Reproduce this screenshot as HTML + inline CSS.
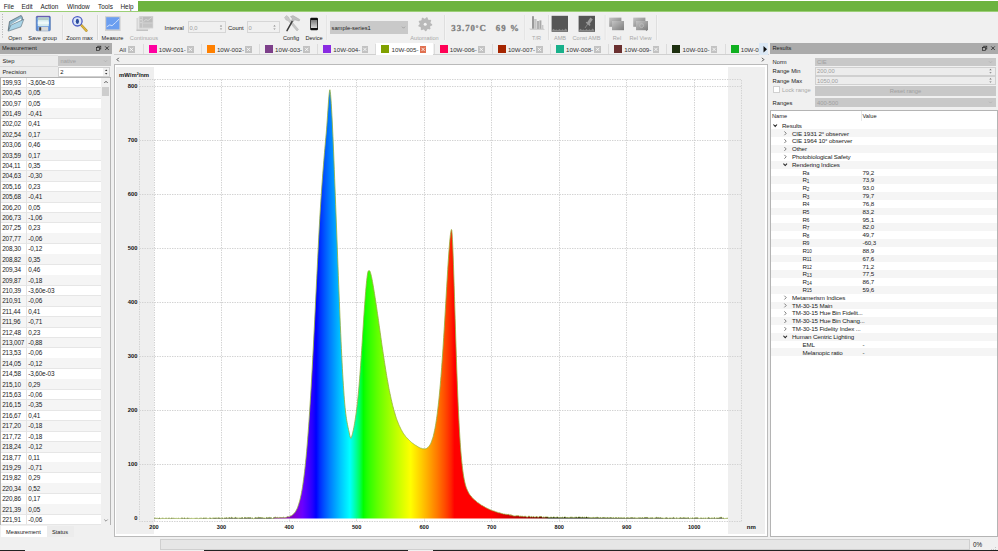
<!DOCTYPE html><html><head><meta charset="utf-8"><style>
html,body{margin:0;padding:0;}
body{width:998px;height:551px;overflow:hidden;position:relative;background:#f0f0f0;font-family:"Liberation Sans",sans-serif;}
.r{position:absolute;box-sizing:border-box;}
.t{position:absolute;white-space:nowrap;line-height:0;height:0;}
.t>span{display:inline-block;}
.sb{font-size:4.6px;position:relative;top:0.4px;}
svg{position:absolute;left:0;top:0;}
</style></head><body>
<div class="r" style="left:0px;top:0px;width:998px;height:12px;background:#fff"></div>
<div class="r" style="left:138px;top:1px;width:860px;height:10.5px;background:#6db33f"></div>
<div class="r" style="left:0px;top:11.3px;width:998px;height:1.2px;background:#9ccf77"></div>
<div class="t " style="left:3.7px;top:6.8px;font-size:6.4px;color:#1a1a1a;">File</div>
<div class="t " style="left:21.6px;top:6.8px;font-size:6.4px;color:#1a1a1a;">Edit</div>
<div class="t " style="left:40.6px;top:6.8px;font-size:6.4px;color:#1a1a1a;">Action</div>
<div class="t " style="left:67px;top:6.8px;font-size:6.4px;color:#1a1a1a;">Window</div>
<div class="t " style="left:98px;top:6.8px;font-size:6.4px;color:#1a1a1a;">Tools</div>
<div class="t " style="left:120.5px;top:6.8px;font-size:6.4px;color:#1a1a1a;">Help</div>
<div class="r" style="left:0px;top:12.5px;width:998px;height:30px;background:#f0f0f0"></div>
<svg width="998" height="551" style="pointer-events:none"><rect x="2" y="14.0" width="1" height="1" fill="#b0b0b0"/><rect x="2" y="16.5" width="1" height="1" fill="#b0b0b0"/><rect x="2" y="19.0" width="1" height="1" fill="#b0b0b0"/><rect x="2" y="21.5" width="1" height="1" fill="#b0b0b0"/><rect x="2" y="24.0" width="1" height="1" fill="#b0b0b0"/><rect x="2" y="26.5" width="1" height="1" fill="#b0b0b0"/><rect x="2" y="29.0" width="1" height="1" fill="#b0b0b0"/><rect x="2" y="31.5" width="1" height="1" fill="#b0b0b0"/><rect x="2" y="34.0" width="1" height="1" fill="#b0b0b0"/><rect x="2" y="36.5" width="1" height="1" fill="#b0b0b0"/><rect x="62" y="15" width="0.8" height="25" fill="#d4d4d4"/><rect x="62.8" y="15" width="0.6" height="25" fill="#fafafa"/><rect x="97.2" y="15" width="0.8" height="25" fill="#d4d4d4"/><rect x="98.0" y="15" width="0.6" height="25" fill="#fafafa"/><rect x="326.6" y="15" width="0.8" height="25" fill="#d4d4d4"/><rect x="327.40000000000003" y="15" width="0.6" height="25" fill="#fafafa"/><rect x="444.4" y="15" width="0.8" height="25" fill="#d4d4d4"/><rect x="445.2" y="15" width="0.6" height="25" fill="#fafafa"/><rect x="524.6" y="15" width="0.8" height="25" fill="#d4d4d4"/><rect x="525.4" y="15" width="0.6" height="25" fill="#fafafa"/><rect x="548.4" y="15" width="0.8" height="25" fill="#d4d4d4"/><rect x="549.1999999999999" y="15" width="0.6" height="25" fill="#fafafa"/><rect x="604.8" y="15" width="0.8" height="25" fill="#d4d4d4"/><rect x="605.5999999999999" y="15" width="0.6" height="25" fill="#fafafa"/><rect x="656" y="15" width="0.8" height="25" fill="#d4d4d4"/><rect x="656.8" y="15" width="0.6" height="25" fill="#fafafa"/></svg>
<div class="t" style="left:15px;top:37.5px;font-size:5.6px;color:#222;transform:translateX(-50%)">Open</div>
<div class="t" style="left:42.5px;top:37.5px;font-size:5.6px;color:#222;transform:translateX(-50%)">Save group</div>
<div class="t" style="left:79.5px;top:37.5px;font-size:5.6px;color:#222;transform:translateX(-50%)">Zoom max</div>
<div class="t" style="left:112.5px;top:37.5px;font-size:5.6px;color:#222;transform:translateX(-50%)">Measure</div>
<div class="t" style="left:144px;top:37.5px;font-size:5.6px;color:#a8a8a8;transform:translateX(-50%)">Continuous</div>
<div class="t" style="left:291px;top:37.5px;font-size:5.6px;color:#222;transform:translateX(-50%)">Config</div>
<div class="t" style="left:314px;top:37.5px;font-size:5.6px;color:#222;transform:translateX(-50%)">Device</div>
<div class="t" style="left:424.5px;top:37.5px;font-size:5.6px;color:#a8a8a8;transform:translateX(-50%)">Automation</div>
<div class="t" style="left:536.5px;top:37.5px;font-size:5.6px;color:#a8a8a8;transform:translateX(-50%)">T/R</div>
<div class="t" style="left:560px;top:37.5px;font-size:5.6px;color:#a8a8a8;transform:translateX(-50%)">AMB</div>
<div class="t" style="left:586.5px;top:37.5px;font-size:5.6px;color:#a8a8a8;transform:translateX(-50%)">Const AMB</div>
<div class="t" style="left:617px;top:37.5px;font-size:5.6px;color:#a8a8a8;transform:translateX(-50%)">Rel</div>
<div class="t" style="left:640.5px;top:37.5px;font-size:5.6px;color:#a8a8a8;transform:translateX(-50%)">Rel View</div>
<svg width="998" height="551" style="pointer-events:none"><g>
<path d="M8.2,30.5 L9.5,21.5 L19.5,16.2 L21.2,15.5 L22.3,17.2 L22.5,19.8 L12,25.5 Z" fill="#8fb8cc" stroke="#4a5a66" stroke-width="0.7"/>
<path d="M10.5,24.8 L20.8,18.5 L21.5,20.2 L11.2,26.5 Z" fill="#ffffff"/>
<path d="M8.3,31.2 L10.8,25.2 L23.8,19.3 L21,26.8 Z" fill="#a9d3e6" stroke="#5a6e7a" stroke-width="0.6"/>
</g><g>
<rect x="36.2" y="16.2" width="14.2" height="14.6" rx="1" fill="#5b8fdc" stroke="#3c5f9c" stroke-width="0.5"/>
<rect x="36.6" y="16.4" width="13.4" height="1" fill="#6a3f9e"/>
<rect x="37.8" y="17.4" width="11" height="8.8" fill="#d6ecee"/>
<rect x="37.8" y="17.4" width="11" height="2.6" fill="#b4ccc8"/>
<rect x="37.8" y="21.5" width="11" height="2.6" fill="#eef8fa"/>
<rect x="38.6" y="26.8" width="9.6" height="4" fill="#d9d9d9"/>
<rect x="39.2" y="27.2" width="2" height="3.4" fill="#3a3a3a"/>
</g><g>
<line x1="81.2" y1="25" x2="86.4" y2="30.6" stroke="#9a7a20" stroke-width="2.4" stroke-linecap="round"/>
<line x1="81.2" y1="25" x2="86.4" y2="30.6" stroke="#e0b840" stroke-width="1.6" stroke-linecap="round"/>
<circle cx="77.4" cy="21.3" r="4.7" fill="#dbe6f8" stroke="#4c5cc4" stroke-width="1.3"/>
<ellipse cx="77.4" cy="21.3" rx="1.6" ry="2.6" fill="#2a4a9a"/>
</g><g>
<rect x="105" y="16.2" width="15.6" height="14.8" fill="#d0d0d0"/>
<rect x="106.2" y="17.2" width="13.2" height="12.2" fill="#6b9ef0"/>
<path d="M106.8,26.8 L109.8,24.9 L112,25.8 L115.5,22.6 L119,19.2" fill="none" stroke="#e8f0ff" stroke-width="0.8"/>
</g><g>
<rect x="136.5" y="18" width="11.5" height="12.8" fill="#d4d4d4"/>
<rect x="137.8" y="17" width="12" height="12.6" fill="#e4e4e4"/>
<rect x="139.2" y="16" width="14" height="12.4" fill="#d0d0d0"/>
<rect x="143" y="17" width="9.4" height="5.4" fill="#bcbcbc"/>
<path d="M143.5,21.5 L146,19.5 L148,20.5 L151.8,17.5" stroke="#e8e8e8" stroke-width="0.6" fill="none"/>
<rect x="143" y="23.6" width="9.4" height="3.8" fill="#c4c4c4"/>
<rect x="139.8" y="17.5" width="2.2" height="10" fill="#c2c2c2"/>
<rect x="139.8" y="19.5" width="2.2" height="0.6" fill="#e6e6e6"/>
<rect x="139.8" y="22.5" width="2.2" height="0.6" fill="#e6e6e6"/>
<rect x="136.5" y="29.6" width="11.5" height="1.3" fill="#c0c0c0"/>
</g><g>
<path d="M284.5,17.5 L286.5,15.5 L288.5,17 L289.5,19 L298.5,29.5 L297,31 L288,20.5 L286,20 Z" fill="#c8c8c8" stroke="#a8a8a8" stroke-width="0.4"/>
<line x1="292.6" y1="20.6" x2="287" y2="30.6" stroke="#3a3a3a" stroke-width="1.5" stroke-linecap="round"/>
<path d="M290.5,16.5 L293,15.6 L299.8,19.5 L299.2,21 L294.5,19.8 L293.5,21.5 L291.5,20.5 L292.3,18.8 Z" fill="#c0c0c0" stroke="#9a9a9a" stroke-width="0.4"/>
</g><g>
<rect x="310.2" y="17.8" width="7.8" height="12.4" rx="1.2" fill="#111"/>
<defs><linearGradient id="scr" x1="0" y1="0" x2="0" y2="1"><stop offset="0" stop-color="#7a7a7a"/><stop offset="1" stop-color="#d8d8d8"/></linearGradient></defs>
<rect x="311" y="20" width="6.2" height="8" fill="url(#scr)"/>
</g><path d="M432.20,24.20 L432.09,25.42 L430.46,26.12 L430.05,27.00 L430.56,28.70 L429.70,29.56 L428.00,29.05 L427.12,29.46 L426.42,31.09 L425.20,31.20 L424.23,29.71 L423.28,29.46 L421.70,30.26 L420.70,29.56 L420.91,27.80 L420.35,27.00 L418.62,26.59 L418.31,25.42 L419.60,24.20 L419.69,23.23 L418.62,21.81 L419.14,20.70 L420.91,20.60 L421.60,19.91 L421.70,18.14 L422.81,17.62 L424.23,18.69 L425.20,18.60 L426.42,17.31 L427.59,17.62 L428.00,19.35 L428.80,19.91 L430.56,19.70 L431.26,20.70 L430.46,22.28 L430.71,23.23Z" fill="#b9b9b9"/><circle cx="425.2" cy="24.2" r="1.5" fill="#f4f4f4"/><g fill="#bdbdbd">
<path d="M529,28.5 L543.5,28.5 L545,30 L530.5,30 Z" fill="#cfcfcf"/>
<rect x="532" y="16.2" width="2" height="12.5" fill="#9a9a9a"/>
<rect x="534.2" y="19" width="2.4" height="9.8" fill="#c4c4c4"/>
<rect x="537" y="21" width="2" height="8" fill="#b0b0b0"/>
<rect x="539.4" y="20.4" width="2" height="8.4" fill="#a8a8a8"/>
<rect x="541.8" y="25" width="1.6" height="4" fill="#c8c8c8"/>
</g><g>
<rect x="551.6" y="15.8" width="16.4" height="16" fill="#555555"/>
<path d="M552.2,31.2 L552.2,30 L553.5,28.8 L555,30 L556.5,29.4 L558,30.2 L559.5,29 L561,30.2 L562.5,29.2 L564,30.2 L565.5,28.6 L567.3,30 L567.3,31.2 Z" fill="#8a8a8a"/>
</g><g>
<rect x="578.6" y="15.8" width="16.4" height="16" fill="#555555"/>
<path d="M579.2,31.2 L579.2,30 L580.5,28.8 L582,30 L583.5,29.4 L585,30.2 L586.5,29 L588,30.2 L589.5,29.2 L591,30.2 L592.5,28.6 L594.3,30 L594.3,31.2 Z" fill="#8a8a8a"/>
<line x1="585" y1="28" x2="588.2" y2="23.4" stroke="#999" stroke-width="0.7"/>
<path d="M587,22.5 L590.5,17.6 L592.8,19.6 L589.2,24.6 Z" fill="#9c9c9c"/>
<path d="M586.2,22.2 L590.2,25.4" stroke="#9c9c9c" stroke-width="1.4"/>
</g><g>
<defs><linearGradient id="relg" x1="0" y1="0" x2="1" y2="1"><stop offset="0" stop-color="#c4c4c4"/><stop offset="1" stop-color="#7c7c7c"/></linearGradient></defs>
<rect x="609.2" y="17.6" width="12.2" height="9.2" fill="url(#relg)"/>
<rect x="612" y="21" width="12" height="9.2" fill="url(#relg)"/>
<rect x="633.2" y="17.6" width="12.2" height="9.2" fill="url(#relg)"/>
<rect x="636" y="21" width="12" height="9.2" fill="url(#relg)"/>
<circle cx="641.6" cy="25.6" r="2" fill="none" stroke="#c0c0c0" stroke-width="0.7"/>
<line x1="643" y1="27.2" x2="647" y2="31" stroke="#8a8a8a" stroke-width="0.9"/>
</g></svg>
<div class="t " style="left:164.5px;top:27.6px;font-size:5.9px;color:#222;">Interval</div>
<div class="r" style="left:187.5px;top:21.3px;width:38px;height:12px;background:#f0f0f0;border:1px solid #d6d6d6"></div>
<div class="t " style="left:189.5px;top:27.6px;font-size:5.8px;color:#a0a0a0;">0,0</div>
<div class="t " style="left:228px;top:27.6px;font-size:5.9px;color:#222;">Count</div>
<div class="r" style="left:246.5px;top:21.3px;width:33px;height:12px;background:#f0f0f0;border:1px solid #d6d6d6"></div>
<div class="t " style="left:248.5px;top:27.6px;font-size:5.8px;color:#a0a0a0;">0</div>
<div class="r" style="left:329.5px;top:21px;width:78px;height:12.8px;background:#c9c9c9"></div>
<div class="t " style="left:331.5px;top:27.5px;font-size:5.8px;color:#222;">sample-series1</div>
<div class="t " style="left:451.3px;top:27.6px;font-size:8.8px;color:#7e7e7e;font-family:'Liberation Serif',serif;letter-spacing:0.95px;-webkit-text-stroke:0.3px #7e7e7e"><b>33.70<span style="font-size:6.5px;position:relative;top:-0.6px">°</span>C</b></div>
<div class="t " style="left:495.8px;top:27.6px;font-size:8.8px;color:#7e7e7e;font-family:'Liberation Serif',serif;letter-spacing:1.1px;-webkit-text-stroke:0.3px #7e7e7e"><b>69 %</b></div>
<div class="r" style="left:0px;top:42.5px;width:111.8px;height:11.3px;background:#ababab"></div>
<div class="t " style="left:2px;top:48.2px;font-size:5.7px;color:#1a1a1a;">Measurement</div>
<div class="r" style="left:0px;top:55.5px;width:58px;height:11px;background:#ececec"></div>
<div class="t " style="left:2.5px;top:61px;font-size:5.8px;color:#222;">Step</div>
<div class="r" style="left:58px;top:55.8px;width:52.7px;height:10.5px;background:#c8c8c8"></div>
<div class="t " style="left:60.5px;top:61px;font-size:5.8px;color:#a0a0a0;">native</div>
<div class="r" style="left:0px;top:66.8px;width:58px;height:10.5px;background:#ececec"></div>
<div class="t " style="left:2.5px;top:72px;font-size:5.8px;color:#222;">Precision</div>
<div class="r" style="left:0px;top:66.2px;width:58px;height:0.7px;background:#d9d9d9"></div>
<div class="r" style="left:0px;top:55.2px;width:58px;height:0.6px;background:#e2e2e2"></div>
<div class="r" style="left:58.3px;top:67.2px;width:52px;height:9.5px;background:#f0f0f0;border:1px solid #cfcfcf"></div>
<div class="r" style="left:59px;top:67.8px;width:43.6px;height:8.4px;background:#fff"></div>
<div class="t " style="left:60.2px;top:72px;font-size:5.8px;color:#111;">2</div>
<div class="r" style="left:0px;top:77.2px;width:111px;height:448px;background:#fff;border:1px solid #b4b4b4"></div>
<div class="r" style="left:1px;top:87.16px;width:100px;height:0.5px;background:#e6e6e6"></div>
<div class="t " style="left:2.2px;top:82.755px;font-size:6.4px;color:#1a1a1a;letter-spacing:-0.15px">199,93</div>
<div class="t " style="left:28.3px;top:82.755px;font-size:6.4px;color:#1a1a1a;letter-spacing:-0.15px">-3,60e-03</div>
<div class="r" style="left:1px;top:87.66px;width:100px;height:10.41px;background:#f5f5f5"></div>
<div class="r" style="left:1px;top:97.57px;width:100px;height:0.5px;background:#e6e6e6"></div>
<div class="t " style="left:2.2px;top:93.16499999999999px;font-size:6.4px;color:#1a1a1a;letter-spacing:-0.15px">200,45</div>
<div class="t " style="left:28.3px;top:93.16499999999999px;font-size:6.4px;color:#1a1a1a;letter-spacing:-0.15px">0,05</div>
<div class="r" style="left:1px;top:107.97999999999999px;width:100px;height:0.5px;background:#e6e6e6"></div>
<div class="t " style="left:2.2px;top:103.57499999999999px;font-size:6.4px;color:#1a1a1a;letter-spacing:-0.15px">200,97</div>
<div class="t " style="left:28.3px;top:103.57499999999999px;font-size:6.4px;color:#1a1a1a;letter-spacing:-0.15px">0,05</div>
<div class="r" style="left:1px;top:108.48px;width:100px;height:10.41px;background:#f5f5f5"></div>
<div class="r" style="left:1px;top:118.39px;width:100px;height:0.5px;background:#e6e6e6"></div>
<div class="t " style="left:2.2px;top:113.985px;font-size:6.4px;color:#1a1a1a;letter-spacing:-0.15px">201,49</div>
<div class="t " style="left:28.3px;top:113.985px;font-size:6.4px;color:#1a1a1a;letter-spacing:-0.15px">-0,41</div>
<div class="r" style="left:1px;top:128.8px;width:100px;height:0.5px;background:#e6e6e6"></div>
<div class="t " style="left:2.2px;top:124.395px;font-size:6.4px;color:#1a1a1a;letter-spacing:-0.15px">202,02</div>
<div class="t " style="left:28.3px;top:124.395px;font-size:6.4px;color:#1a1a1a;letter-spacing:-0.15px">0,41</div>
<div class="r" style="left:1px;top:129.3px;width:100px;height:10.41px;background:#f5f5f5"></div>
<div class="r" style="left:1px;top:139.21px;width:100px;height:0.5px;background:#e6e6e6"></div>
<div class="t " style="left:2.2px;top:134.80500000000004px;font-size:6.4px;color:#1a1a1a;letter-spacing:-0.15px">202,54</div>
<div class="t " style="left:28.3px;top:134.80500000000004px;font-size:6.4px;color:#1a1a1a;letter-spacing:-0.15px">0,17</div>
<div class="r" style="left:1px;top:149.62px;width:100px;height:0.5px;background:#e6e6e6"></div>
<div class="t " style="left:2.2px;top:145.21500000000003px;font-size:6.4px;color:#1a1a1a;letter-spacing:-0.15px">203,06</div>
<div class="t " style="left:28.3px;top:145.21500000000003px;font-size:6.4px;color:#1a1a1a;letter-spacing:-0.15px">0,46</div>
<div class="r" style="left:1px;top:150.12px;width:100px;height:10.41px;background:#f5f5f5"></div>
<div class="r" style="left:1px;top:160.03px;width:100px;height:0.5px;background:#e6e6e6"></div>
<div class="t " style="left:2.2px;top:155.62500000000003px;font-size:6.4px;color:#1a1a1a;letter-spacing:-0.15px">203,59</div>
<div class="t " style="left:28.3px;top:155.62500000000003px;font-size:6.4px;color:#1a1a1a;letter-spacing:-0.15px">0,17</div>
<div class="r" style="left:1px;top:170.44px;width:100px;height:0.5px;background:#e6e6e6"></div>
<div class="t " style="left:2.2px;top:166.03500000000003px;font-size:6.4px;color:#1a1a1a;letter-spacing:-0.15px">204,11</div>
<div class="t " style="left:28.3px;top:166.03500000000003px;font-size:6.4px;color:#1a1a1a;letter-spacing:-0.15px">0,35</div>
<div class="r" style="left:1px;top:170.94px;width:100px;height:10.41px;background:#f5f5f5"></div>
<div class="r" style="left:1px;top:180.85px;width:100px;height:0.5px;background:#e6e6e6"></div>
<div class="t " style="left:2.2px;top:176.44500000000002px;font-size:6.4px;color:#1a1a1a;letter-spacing:-0.15px">204,63</div>
<div class="t " style="left:28.3px;top:176.44500000000002px;font-size:6.4px;color:#1a1a1a;letter-spacing:-0.15px">-0,30</div>
<div class="r" style="left:1px;top:191.26px;width:100px;height:0.5px;background:#e6e6e6"></div>
<div class="t " style="left:2.2px;top:186.85500000000002px;font-size:6.4px;color:#1a1a1a;letter-spacing:-0.15px">205,16</div>
<div class="t " style="left:28.3px;top:186.85500000000002px;font-size:6.4px;color:#1a1a1a;letter-spacing:-0.15px">0,23</div>
<div class="r" style="left:1px;top:191.76px;width:100px;height:10.41px;background:#f5f5f5"></div>
<div class="r" style="left:1px;top:201.67px;width:100px;height:0.5px;background:#e6e6e6"></div>
<div class="t " style="left:2.2px;top:197.26500000000001px;font-size:6.4px;color:#1a1a1a;letter-spacing:-0.15px">205,68</div>
<div class="t " style="left:28.3px;top:197.26500000000001px;font-size:6.4px;color:#1a1a1a;letter-spacing:-0.15px">-0,41</div>
<div class="r" style="left:1px;top:212.08px;width:100px;height:0.5px;background:#e6e6e6"></div>
<div class="t " style="left:2.2px;top:207.67500000000004px;font-size:6.4px;color:#1a1a1a;letter-spacing:-0.15px">206,20</div>
<div class="t " style="left:28.3px;top:207.67500000000004px;font-size:6.4px;color:#1a1a1a;letter-spacing:-0.15px">0,05</div>
<div class="r" style="left:1px;top:212.58px;width:100px;height:10.41px;background:#f5f5f5"></div>
<div class="r" style="left:1px;top:222.49px;width:100px;height:0.5px;background:#e6e6e6"></div>
<div class="t " style="left:2.2px;top:218.08500000000004px;font-size:6.4px;color:#1a1a1a;letter-spacing:-0.15px">206,73</div>
<div class="t " style="left:28.3px;top:218.08500000000004px;font-size:6.4px;color:#1a1a1a;letter-spacing:-0.15px">-1,06</div>
<div class="r" style="left:1px;top:232.9px;width:100px;height:0.5px;background:#e6e6e6"></div>
<div class="t " style="left:2.2px;top:228.49500000000003px;font-size:6.4px;color:#1a1a1a;letter-spacing:-0.15px">207,25</div>
<div class="t " style="left:28.3px;top:228.49500000000003px;font-size:6.4px;color:#1a1a1a;letter-spacing:-0.15px">0,23</div>
<div class="r" style="left:1px;top:233.4px;width:100px;height:10.41px;background:#f5f5f5"></div>
<div class="r" style="left:1px;top:243.31px;width:100px;height:0.5px;background:#e6e6e6"></div>
<div class="t " style="left:2.2px;top:238.90500000000003px;font-size:6.4px;color:#1a1a1a;letter-spacing:-0.15px">207,77</div>
<div class="t " style="left:28.3px;top:238.90500000000003px;font-size:6.4px;color:#1a1a1a;letter-spacing:-0.15px">-0,06</div>
<div class="r" style="left:1px;top:253.72px;width:100px;height:0.5px;background:#e6e6e6"></div>
<div class="t " style="left:2.2px;top:249.31500000000003px;font-size:6.4px;color:#1a1a1a;letter-spacing:-0.15px">208,30</div>
<div class="t " style="left:28.3px;top:249.31500000000003px;font-size:6.4px;color:#1a1a1a;letter-spacing:-0.15px">-0,12</div>
<div class="r" style="left:1px;top:254.22px;width:100px;height:10.41px;background:#f5f5f5"></div>
<div class="r" style="left:1px;top:264.13px;width:100px;height:0.5px;background:#e6e6e6"></div>
<div class="t " style="left:2.2px;top:259.725px;font-size:6.4px;color:#1a1a1a;letter-spacing:-0.15px">208,82</div>
<div class="t " style="left:28.3px;top:259.725px;font-size:6.4px;color:#1a1a1a;letter-spacing:-0.15px">0,35</div>
<div class="r" style="left:1px;top:274.54px;width:100px;height:0.5px;background:#e6e6e6"></div>
<div class="t " style="left:2.2px;top:270.135px;font-size:6.4px;color:#1a1a1a;letter-spacing:-0.15px">209,34</div>
<div class="t " style="left:28.3px;top:270.135px;font-size:6.4px;color:#1a1a1a;letter-spacing:-0.15px">0,46</div>
<div class="r" style="left:1px;top:275.03999999999996px;width:100px;height:10.41px;background:#f5f5f5"></div>
<div class="r" style="left:1px;top:284.95px;width:100px;height:0.5px;background:#e6e6e6"></div>
<div class="t " style="left:2.2px;top:280.54499999999996px;font-size:6.4px;color:#1a1a1a;letter-spacing:-0.15px">209,87</div>
<div class="t " style="left:28.3px;top:280.54499999999996px;font-size:6.4px;color:#1a1a1a;letter-spacing:-0.15px">-0,18</div>
<div class="r" style="left:1px;top:295.36px;width:100px;height:0.5px;background:#e6e6e6"></div>
<div class="t " style="left:2.2px;top:290.955px;font-size:6.4px;color:#1a1a1a;letter-spacing:-0.15px">210,39</div>
<div class="t " style="left:28.3px;top:290.955px;font-size:6.4px;color:#1a1a1a;letter-spacing:-0.15px">-3,60e-03</div>
<div class="r" style="left:1px;top:295.86px;width:100px;height:10.41px;background:#f5f5f5"></div>
<div class="r" style="left:1px;top:305.77000000000004px;width:100px;height:0.5px;background:#e6e6e6"></div>
<div class="t " style="left:2.2px;top:301.365px;font-size:6.4px;color:#1a1a1a;letter-spacing:-0.15px">210,91</div>
<div class="t " style="left:28.3px;top:301.365px;font-size:6.4px;color:#1a1a1a;letter-spacing:-0.15px">-0,06</div>
<div class="r" style="left:1px;top:316.18px;width:100px;height:0.5px;background:#e6e6e6"></div>
<div class="t " style="left:2.2px;top:311.775px;font-size:6.4px;color:#1a1a1a;letter-spacing:-0.15px">211,44</div>
<div class="t " style="left:28.3px;top:311.775px;font-size:6.4px;color:#1a1a1a;letter-spacing:-0.15px">0,41</div>
<div class="r" style="left:1px;top:316.68px;width:100px;height:10.41px;background:#f5f5f5"></div>
<div class="r" style="left:1px;top:326.59000000000003px;width:100px;height:0.5px;background:#e6e6e6"></div>
<div class="t " style="left:2.2px;top:322.185px;font-size:6.4px;color:#1a1a1a;letter-spacing:-0.15px">211,96</div>
<div class="t " style="left:28.3px;top:322.185px;font-size:6.4px;color:#1a1a1a;letter-spacing:-0.15px">-0,71</div>
<div class="r" style="left:1px;top:337.00000000000006px;width:100px;height:0.5px;background:#e6e6e6"></div>
<div class="t " style="left:2.2px;top:332.595px;font-size:6.4px;color:#1a1a1a;letter-spacing:-0.15px">212,48</div>
<div class="t " style="left:28.3px;top:332.595px;font-size:6.4px;color:#1a1a1a;letter-spacing:-0.15px">0,23</div>
<div class="r" style="left:1px;top:337.5px;width:100px;height:10.41px;background:#f5f5f5"></div>
<div class="r" style="left:1px;top:347.41px;width:100px;height:0.5px;background:#e6e6e6"></div>
<div class="t " style="left:2.2px;top:343.005px;font-size:6.4px;color:#1a1a1a;letter-spacing:-0.15px">213,007</div>
<div class="t " style="left:28.3px;top:343.005px;font-size:6.4px;color:#1a1a1a;letter-spacing:-0.15px">-0,88</div>
<div class="r" style="left:1px;top:357.82000000000005px;width:100px;height:0.5px;background:#e6e6e6"></div>
<div class="t " style="left:2.2px;top:353.415px;font-size:6.4px;color:#1a1a1a;letter-spacing:-0.15px">213,53</div>
<div class="t " style="left:28.3px;top:353.415px;font-size:6.4px;color:#1a1a1a;letter-spacing:-0.15px">-0,06</div>
<div class="r" style="left:1px;top:358.32px;width:100px;height:10.41px;background:#f5f5f5"></div>
<div class="r" style="left:1px;top:368.23px;width:100px;height:0.5px;background:#e6e6e6"></div>
<div class="t " style="left:2.2px;top:363.825px;font-size:6.4px;color:#1a1a1a;letter-spacing:-0.15px">214,05</div>
<div class="t " style="left:28.3px;top:363.825px;font-size:6.4px;color:#1a1a1a;letter-spacing:-0.15px">-0,12</div>
<div class="r" style="left:1px;top:378.64000000000004px;width:100px;height:0.5px;background:#e6e6e6"></div>
<div class="t " style="left:2.2px;top:374.235px;font-size:6.4px;color:#1a1a1a;letter-spacing:-0.15px">214,58</div>
<div class="t " style="left:28.3px;top:374.235px;font-size:6.4px;color:#1a1a1a;letter-spacing:-0.15px">-3,60e-03</div>
<div class="r" style="left:1px;top:379.14px;width:100px;height:10.41px;background:#f5f5f5"></div>
<div class="r" style="left:1px;top:389.05px;width:100px;height:0.5px;background:#e6e6e6"></div>
<div class="t " style="left:2.2px;top:384.645px;font-size:6.4px;color:#1a1a1a;letter-spacing:-0.15px">215,10</div>
<div class="t " style="left:28.3px;top:384.645px;font-size:6.4px;color:#1a1a1a;letter-spacing:-0.15px">0,29</div>
<div class="r" style="left:1px;top:399.46000000000004px;width:100px;height:0.5px;background:#e6e6e6"></div>
<div class="t " style="left:2.2px;top:395.055px;font-size:6.4px;color:#1a1a1a;letter-spacing:-0.15px">215,63</div>
<div class="t " style="left:28.3px;top:395.055px;font-size:6.4px;color:#1a1a1a;letter-spacing:-0.15px">-0,06</div>
<div class="r" style="left:1px;top:399.96px;width:100px;height:10.41px;background:#f5f5f5"></div>
<div class="r" style="left:1px;top:409.87px;width:100px;height:0.5px;background:#e6e6e6"></div>
<div class="t " style="left:2.2px;top:405.465px;font-size:6.4px;color:#1a1a1a;letter-spacing:-0.15px">216,15</div>
<div class="t " style="left:28.3px;top:405.465px;font-size:6.4px;color:#1a1a1a;letter-spacing:-0.15px">-0,35</div>
<div class="r" style="left:1px;top:420.28000000000003px;width:100px;height:0.5px;background:#e6e6e6"></div>
<div class="t " style="left:2.2px;top:415.875px;font-size:6.4px;color:#1a1a1a;letter-spacing:-0.15px">216,67</div>
<div class="t " style="left:28.3px;top:415.875px;font-size:6.4px;color:#1a1a1a;letter-spacing:-0.15px">0,41</div>
<div class="r" style="left:1px;top:420.78000000000003px;width:100px;height:10.41px;background:#f5f5f5"></div>
<div class="r" style="left:1px;top:430.69000000000005px;width:100px;height:0.5px;background:#e6e6e6"></div>
<div class="t " style="left:2.2px;top:426.285px;font-size:6.4px;color:#1a1a1a;letter-spacing:-0.15px">217,20</div>
<div class="t " style="left:28.3px;top:426.285px;font-size:6.4px;color:#1a1a1a;letter-spacing:-0.15px">-0,18</div>
<div class="r" style="left:1px;top:441.1px;width:100px;height:0.5px;background:#e6e6e6"></div>
<div class="t " style="left:2.2px;top:436.695px;font-size:6.4px;color:#1a1a1a;letter-spacing:-0.15px">217,72</div>
<div class="t " style="left:28.3px;top:436.695px;font-size:6.4px;color:#1a1a1a;letter-spacing:-0.15px">-0,18</div>
<div class="r" style="left:1px;top:441.6px;width:100px;height:10.41px;background:#f5f5f5"></div>
<div class="r" style="left:1px;top:451.51000000000005px;width:100px;height:0.5px;background:#e6e6e6"></div>
<div class="t " style="left:2.2px;top:447.105px;font-size:6.4px;color:#1a1a1a;letter-spacing:-0.15px">218,24</div>
<div class="t " style="left:28.3px;top:447.105px;font-size:6.4px;color:#1a1a1a;letter-spacing:-0.15px">-0,12</div>
<div class="r" style="left:1px;top:461.92px;width:100px;height:0.5px;background:#e6e6e6"></div>
<div class="t " style="left:2.2px;top:457.515px;font-size:6.4px;color:#1a1a1a;letter-spacing:-0.15px">218,77</div>
<div class="t " style="left:28.3px;top:457.515px;font-size:6.4px;color:#1a1a1a;letter-spacing:-0.15px">0,11</div>
<div class="r" style="left:1px;top:462.42px;width:100px;height:10.41px;background:#f5f5f5"></div>
<div class="r" style="left:1px;top:472.33000000000004px;width:100px;height:0.5px;background:#e6e6e6"></div>
<div class="t " style="left:2.2px;top:467.925px;font-size:6.4px;color:#1a1a1a;letter-spacing:-0.15px">219,29</div>
<div class="t " style="left:28.3px;top:467.925px;font-size:6.4px;color:#1a1a1a;letter-spacing:-0.15px">-0,71</div>
<div class="r" style="left:1px;top:482.74px;width:100px;height:0.5px;background:#e6e6e6"></div>
<div class="t " style="left:2.2px;top:478.335px;font-size:6.4px;color:#1a1a1a;letter-spacing:-0.15px">219,82</div>
<div class="t " style="left:28.3px;top:478.335px;font-size:6.4px;color:#1a1a1a;letter-spacing:-0.15px">0,29</div>
<div class="r" style="left:1px;top:483.24px;width:100px;height:10.41px;background:#f5f5f5"></div>
<div class="r" style="left:1px;top:493.15000000000003px;width:100px;height:0.5px;background:#e6e6e6"></div>
<div class="t " style="left:2.2px;top:488.745px;font-size:6.4px;color:#1a1a1a;letter-spacing:-0.15px">220,34</div>
<div class="t " style="left:28.3px;top:488.745px;font-size:6.4px;color:#1a1a1a;letter-spacing:-0.15px">0,52</div>
<div class="r" style="left:1px;top:503.56px;width:100px;height:0.5px;background:#e6e6e6"></div>
<div class="t " style="left:2.2px;top:499.155px;font-size:6.4px;color:#1a1a1a;letter-spacing:-0.15px">220,86</div>
<div class="t " style="left:28.3px;top:499.155px;font-size:6.4px;color:#1a1a1a;letter-spacing:-0.15px">0,17</div>
<div class="r" style="left:1px;top:504.06px;width:100px;height:10.41px;background:#f5f5f5"></div>
<div class="r" style="left:1px;top:513.97px;width:100px;height:0.5px;background:#e6e6e6"></div>
<div class="t " style="left:2.2px;top:509.565px;font-size:6.4px;color:#1a1a1a;letter-spacing:-0.15px">221,39</div>
<div class="t " style="left:28.3px;top:509.565px;font-size:6.4px;color:#1a1a1a;letter-spacing:-0.15px">0,05</div>
<div class="r" style="left:1px;top:524.38px;width:100px;height:0.5px;background:#e6e6e6"></div>
<div class="t " style="left:2.2px;top:519.975px;font-size:6.4px;color:#1a1a1a;letter-spacing:-0.15px">221,91</div>
<div class="t " style="left:28.3px;top:519.975px;font-size:6.4px;color:#1a1a1a;letter-spacing:-0.15px">-0,06</div>
<div class="r" style="left:26.3px;top:77.6px;width:0.6px;height:447px;background:#e4e4e4"></div>
<div class="r" style="left:101px;top:77.6px;width:9.2px;height:447px;background:#f0f0f0"></div>
<div class="r" style="left:102px;top:86.6px;width:7.2px;height:9px;background:#cdcdcd"></div>
<div class="r" style="left:0.5px;top:526px;width:46.5px;height:10.8px;background:#fff"></div>
<div class="t " style="left:6px;top:531.6px;font-size:5.7px;color:#222;">Measurement</div>
<div class="r" style="left:47px;top:526px;width:27px;height:10.5px;background:#ececec"></div>
<div class="t " style="left:52px;top:531.6px;font-size:5.7px;color:#222;">Status</div>
<div class="r" style="left:114px;top:43px;width:655px;height:11.5px;background:#f0f0f0"></div>
<div class="r" style="left:114px;top:54.2px;width:655px;height:0.8px;background:#d0d0d0"></div>
<div class="r" style="left:114px;top:55px;width:655px;height:9.3px;background:#f0f0f0"></div>
<div class="t " style="left:119.3px;top:49.8px;font-size:6px;color:#333;">All</div>
<div class="r" style="left:128px;top:46px;width:6.8px;height:6.8px;background:#c2c2c2"></div>
<svg width="998" height="551" style="pointer-events:none"><path d="M129.8,47.8 L133,51 M133,47.8 L129.8,51" stroke="#fff" stroke-width="0.8"/></svg>
<div class="r" style="left:142.5px;top:43.5px;width:0.8px;height:10.5px;background:#dcdcdc"></div>
<div class="r" style="left:148.5px;top:45px;width:8px;height:7.8px;background:#ff00a0"></div>
<div class="t " style="left:158.7px;top:49.8px;font-size:6.2px;color:#333;">10W-001-</div>
<div class="r" style="left:186.9px;top:46px;width:6.8px;height:6.8px;background:#c2c2c2"></div>
<svg width="998" height="551" style="pointer-events:none"><path d="M188.70000000000002,47.8 L191.9,51 M191.9,47.8 L188.70000000000002,51" stroke="#fff" stroke-width="0.8"/></svg>
<div class="r" style="left:200.7px;top:43.5px;width:0.8px;height:10.5px;background:#dcdcdc"></div>
<div class="r" style="left:206.7px;top:45px;width:8px;height:7.8px;background:#ff8000"></div>
<div class="t " style="left:216.89999999999998px;top:49.8px;font-size:6.2px;color:#333;">10W-002-</div>
<div class="r" style="left:245.1px;top:46px;width:6.8px;height:6.8px;background:#c2c2c2"></div>
<svg width="998" height="551" style="pointer-events:none"><path d="M246.9,47.8 L250.1,51 M250.1,47.8 L246.9,51" stroke="#fff" stroke-width="0.8"/></svg>
<div class="r" style="left:258.9px;top:43.5px;width:0.8px;height:10.5px;background:#dcdcdc"></div>
<div class="r" style="left:264.9px;top:45px;width:8px;height:7.8px;background:#7d3f8a"></div>
<div class="t " style="left:275.09999999999997px;top:49.8px;font-size:6.2px;color:#333;">10W-003-</div>
<div class="r" style="left:303.29999999999995px;top:46px;width:6.8px;height:6.8px;background:#c2c2c2"></div>
<svg width="998" height="551" style="pointer-events:none"><path d="M305.09999999999997,47.8 L308.29999999999995,51 M308.29999999999995,47.8 L305.09999999999997,51" stroke="#fff" stroke-width="0.8"/></svg>
<div class="r" style="left:317.1px;top:43.5px;width:0.8px;height:10.5px;background:#dcdcdc"></div>
<div class="r" style="left:323.1px;top:45px;width:8px;height:7.8px;background:#8a2be2"></div>
<div class="t " style="left:333.3px;top:49.8px;font-size:6.2px;color:#333;">10W-004-</div>
<div class="r" style="left:361.5px;top:46px;width:6.8px;height:6.8px;background:#c2c2c2"></div>
<svg width="998" height="551" style="pointer-events:none"><path d="M363.3,47.8 L366.5,51 M366.5,47.8 L363.3,51" stroke="#fff" stroke-width="0.8"/></svg>
<div class="r" style="left:375.3px;top:43.5px;width:0.8px;height:10.5px;background:#dcdcdc"></div>
<div class="r" style="left:376.1px;top:43px;width:57.4px;height:11.8px;background:#fff"></div>
<div class="r" style="left:381.3px;top:45px;width:8px;height:7.8px;background:#80a000"></div>
<div class="t " style="left:391.5px;top:49.8px;font-size:6.2px;color:#333;">10W-005-</div>
<div class="r" style="left:419.7px;top:46px;width:6.8px;height:6.8px;background:#e07050"></div>
<svg width="998" height="551" style="pointer-events:none"><path d="M421.5,47.8 L424.7,51 M424.7,47.8 L421.5,51" stroke="#fff" stroke-width="0.8"/></svg>
<div class="r" style="left:433.5px;top:43.5px;width:0.8px;height:10.5px;background:#dcdcdc"></div>
<div class="r" style="left:439.5px;top:45px;width:8px;height:7.8px;background:#ff0055"></div>
<div class="t " style="left:449.7px;top:49.8px;font-size:6.2px;color:#333;">10W-006-</div>
<div class="r" style="left:477.9px;top:46px;width:6.8px;height:6.8px;background:#c2c2c2"></div>
<svg width="998" height="551" style="pointer-events:none"><path d="M479.7,47.8 L482.9,51 M482.9,47.8 L479.7,51" stroke="#fff" stroke-width="0.8"/></svg>
<div class="r" style="left:491.70000000000005px;top:43.5px;width:0.8px;height:10.5px;background:#dcdcdc"></div>
<div class="r" style="left:497.70000000000005px;top:45px;width:8px;height:7.8px;background:#a52500"></div>
<div class="t " style="left:507.90000000000003px;top:49.8px;font-size:6.2px;color:#333;">10W-007-</div>
<div class="r" style="left:536.1px;top:46px;width:6.8px;height:6.8px;background:#c2c2c2"></div>
<svg width="998" height="551" style="pointer-events:none"><path d="M537.9,47.8 L541.1,51 M541.1,47.8 L537.9,51" stroke="#fff" stroke-width="0.8"/></svg>
<div class="r" style="left:549.9000000000001px;top:43.5px;width:0.8px;height:10.5px;background:#dcdcdc"></div>
<div class="r" style="left:555.9000000000001px;top:45px;width:8px;height:7.8px;background:#18b08a"></div>
<div class="t " style="left:566.1000000000001px;top:49.8px;font-size:6.2px;color:#333;">10W-008-</div>
<div class="r" style="left:594.3000000000001px;top:46px;width:6.8px;height:6.8px;background:#c2c2c2"></div>
<svg width="998" height="551" style="pointer-events:none"><path d="M596.1,47.8 L599.3000000000001,51 M599.3000000000001,47.8 L596.1,51" stroke="#fff" stroke-width="0.8"/></svg>
<div class="r" style="left:608.1px;top:43.5px;width:0.8px;height:10.5px;background:#dcdcdc"></div>
<div class="r" style="left:614.1px;top:45px;width:8px;height:7.8px;background:#6b3030"></div>
<div class="t " style="left:624.3000000000001px;top:49.8px;font-size:6.2px;color:#333;">10W-009-</div>
<div class="r" style="left:652.5px;top:46px;width:6.8px;height:6.8px;background:#c2c2c2"></div>
<svg width="998" height="551" style="pointer-events:none"><path d="M654.3,47.8 L657.5,51 M657.5,47.8 L654.3,51" stroke="#fff" stroke-width="0.8"/></svg>
<div class="r" style="left:666.3000000000001px;top:43.5px;width:0.8px;height:10.5px;background:#dcdcdc"></div>
<div class="r" style="left:672.3000000000001px;top:45px;width:8px;height:7.8px;background:#1e3010"></div>
<div class="t " style="left:682.5000000000001px;top:49.8px;font-size:6.2px;color:#333;">10W-010-</div>
<div class="r" style="left:710.7px;top:46px;width:6.8px;height:6.8px;background:#c2c2c2"></div>
<svg width="998" height="551" style="pointer-events:none"><path d="M712.5,47.8 L715.7,51 M715.7,47.8 L712.5,51" stroke="#fff" stroke-width="0.8"/></svg>
<div class="r" style="left:724.5px;top:43.5px;width:0.8px;height:10.5px;background:#dcdcdc"></div>
<div class="r" style="left:730.5px;top:45px;width:8px;height:7.8px;background:#10b020"></div>
<div class="t " style="left:740.7px;top:49.8px;font-size:6.2px;color:#333;">10W-011-</div>
<div class="r" style="left:759px;top:43px;width:9px;height:11.5px;background:#dbe8f5"></div>
<svg width="998" height="551" style="pointer-events:none"><path d="M763.5,46 L767,49.3 L763.5,52.6 Z" fill="#111"/><path d="M118.8,57.8 L117,59.6 L118.8,61.4" fill="none" stroke="#333" stroke-width="0.9"/><path d="M762,57.8 L763.8,59.6 L762,61.4" fill="none" stroke="#333" stroke-width="0.9"/></svg>
<div class="r" style="left:114px;top:64.2px;width:654px;height:473.2px;background:#fff;border:1px solid #bababa"></div>
<div class="r" style="left:115.8px;top:66.8px;width:38.2px;height:467px;background:#efefef"></div>
<div class="r" style="left:727.8px;top:66.8px;width:37.2px;height:467px;background:#efefef"></div>
<svg width="998" height="551" style="pointer-events:none"><defs><linearGradient id="spec" gradientUnits="userSpaceOnUse" x1="154.0" y1="0" x2="728.0" y2="0"><stop offset="0.2000" stop-color="#000000"/><stop offset="0.2059" stop-color="#000000"/><stop offset="0.2118" stop-color="#610061"/><stop offset="0.2176" stop-color="#6f0077"/><stop offset="0.2235" stop-color="#79008d"/><stop offset="0.2294" stop-color="#8000a1"/><stop offset="0.2353" stop-color="#8300b5"/><stop offset="0.2412" stop-color="#8200c8"/><stop offset="0.2471" stop-color="#7e00db"/><stop offset="0.2529" stop-color="#7600ed"/><stop offset="0.2588" stop-color="#6a00ff"/><stop offset="0.2647" stop-color="#5400ff"/><stop offset="0.2706" stop-color="#3d00ff"/><stop offset="0.2765" stop-color="#2300ff"/><stop offset="0.2824" stop-color="#0000ff"/><stop offset="0.2882" stop-color="#0028ff"/><stop offset="0.2941" stop-color="#0046ff"/><stop offset="0.3000" stop-color="#0061ff"/><stop offset="0.3059" stop-color="#007bff"/><stop offset="0.3118" stop-color="#0092ff"/><stop offset="0.3176" stop-color="#00a9ff"/><stop offset="0.3235" stop-color="#00c0ff"/><stop offset="0.3294" stop-color="#00d5ff"/><stop offset="0.3353" stop-color="#00eaff"/><stop offset="0.3412" stop-color="#00ffff"/><stop offset="0.3471" stop-color="#00ffcb"/><stop offset="0.3529" stop-color="#00ff92"/><stop offset="0.3588" stop-color="#00ff54"/><stop offset="0.3647" stop-color="#00ff00"/><stop offset="0.3706" stop-color="#1fff00"/><stop offset="0.3765" stop-color="#36ff00"/><stop offset="0.3824" stop-color="#4aff00"/><stop offset="0.3882" stop-color="#5eff00"/><stop offset="0.3941" stop-color="#70ff00"/><stop offset="0.4000" stop-color="#81ff00"/><stop offset="0.4059" stop-color="#92ff00"/><stop offset="0.4118" stop-color="#a3ff00"/><stop offset="0.4176" stop-color="#b3ff00"/><stop offset="0.4235" stop-color="#c3ff00"/><stop offset="0.4294" stop-color="#d2ff00"/><stop offset="0.4353" stop-color="#e1ff00"/><stop offset="0.4412" stop-color="#f0ff00"/><stop offset="0.4471" stop-color="#ffff00"/><stop offset="0.4529" stop-color="#ffef00"/><stop offset="0.4588" stop-color="#ffdf00"/><stop offset="0.4647" stop-color="#ffcf00"/><stop offset="0.4706" stop-color="#ffbe00"/><stop offset="0.4765" stop-color="#ffad00"/><stop offset="0.4824" stop-color="#ff9b00"/><stop offset="0.4882" stop-color="#ff8900"/><stop offset="0.4941" stop-color="#ff7700"/><stop offset="0.5000" stop-color="#ff6300"/><stop offset="0.5059" stop-color="#ff4f00"/><stop offset="0.5118" stop-color="#ff3900"/><stop offset="0.5176" stop-color="#ff2100"/><stop offset="0.5235" stop-color="#ff0000"/><stop offset="0.5294" stop-color="#ff0000"/><stop offset="0.5353" stop-color="#ff0000"/><stop offset="0.5412" stop-color="#ff0000"/><stop offset="0.5471" stop-color="#ff0000"/><stop offset="0.5529" stop-color="#ff0000"/><stop offset="0.5588" stop-color="#ff0000"/><stop offset="0.5647" stop-color="#ff0000"/><stop offset="0.5706" stop-color="#ff0000"/><stop offset="0.5765" stop-color="#ff0000"/><stop offset="0.5824" stop-color="#ff0000"/><stop offset="0.5882" stop-color="#ff0000"/><stop offset="0.5941" stop-color="#f60000"/><stop offset="0.6000" stop-color="#ed0000"/><stop offset="0.6059" stop-color="#e40000"/><stop offset="0.6118" stop-color="#db0000"/><stop offset="0.6176" stop-color="#d10000"/><stop offset="0.6235" stop-color="#c80000"/><stop offset="0.6294" stop-color="#be0000"/><stop offset="0.6353" stop-color="#b50000"/><stop offset="0.6412" stop-color="#ab0000"/><stop offset="0.6471" stop-color="#a10000"/><stop offset="0.6529" stop-color="#970000"/><stop offset="0.6588" stop-color="#8d0000"/><stop offset="0.6647" stop-color="#820000"/><stop offset="0.6706" stop-color="#770000"/><stop offset="0.6765" stop-color="#6d0000"/><stop offset="0.6824" stop-color="#610000"/><stop offset="0.6882" stop-color="#000000"/></linearGradient></defs><g stroke="#d2d2d2" stroke-width="1" stroke-dasharray="1.4,1.1"><line x1="154.5" y1="79.5" x2="154.5" y2="521.5"/><line x1="221.5" y1="79.5" x2="221.5" y2="521.5"/><line x1="289.5" y1="79.5" x2="289.5" y2="521.5"/><line x1="356.5" y1="79.5" x2="356.5" y2="521.5"/><line x1="424.5" y1="79.5" x2="424.5" y2="521.5"/><line x1="491.5" y1="79.5" x2="491.5" y2="521.5"/><line x1="559.5" y1="79.5" x2="559.5" y2="521.5"/><line x1="626.5" y1="79.5" x2="626.5" y2="521.5"/><line x1="694.5" y1="79.5" x2="694.5" y2="521.5"/><line x1="139.5" y1="464.5" x2="741.5" y2="464.5"/><line x1="139.5" y1="410.5" x2="741.5" y2="410.5"/><line x1="139.5" y1="356.5" x2="741.5" y2="356.5"/><line x1="139.5" y1="302.5" x2="741.5" y2="302.5"/><line x1="139.5" y1="248.5" x2="741.5" y2="248.5"/><line x1="139.5" y1="194.5" x2="741.5" y2="194.5"/><line x1="139.5" y1="140.5" x2="741.5" y2="140.5"/><line x1="139.5" y1="86.5" x2="741.5" y2="86.5"/><rect x="139.5" y="79.5" width="602" height="442" fill="none"/></g><path d="M154.0,518.5 L154.00,518.06 L154.34,518.16 L154.68,518.21 L155.01,518.17 L155.35,518.14 L155.69,518.21 L156.03,518.33 L156.36,518.35 L156.70,518.37 L157.04,518.42 L157.38,518.33 L157.71,518.35 L158.05,518.67 L158.39,518.66 L158.73,518.28 L159.06,518.05 L159.40,517.98 L159.74,518.03 L160.08,518.34 L160.41,518.55 L160.75,518.61 L161.09,518.57 L161.43,518.44 L161.77,518.28 L162.10,518.15 L162.44,518.15 L162.78,518.22 L163.12,518.25 L163.45,518.33 L163.79,518.44 L164.13,518.48 L164.47,518.52 L164.80,518.46 L165.14,518.35 L165.48,518.29 L165.82,518.23 L166.15,518.19 L166.49,518.19 L166.83,518.35 L167.17,518.44 L167.50,518.42 L167.84,518.47 L168.18,518.35 L168.52,518.20 L168.86,518.08 L169.19,518.05 L169.53,518.19 L169.87,518.42 L170.21,518.56 L170.54,518.50 L170.88,518.29 L171.22,518.07 L171.56,518.06 L171.89,518.25 L172.23,518.28 L172.57,518.25 L172.91,518.21 L173.24,518.21 L173.58,518.29 L173.92,518.28 L174.26,518.35 L174.60,518.40 L174.93,518.28 L175.27,518.37 L175.61,518.45 L175.95,518.38 L176.28,518.32 L176.62,518.42 L176.96,518.55 L177.30,518.56 L177.63,518.39 L177.97,518.20 L178.31,518.19 L178.65,518.24 L178.98,518.29 L179.32,518.41 L179.66,518.50 L180.00,518.42 L180.33,518.42 L180.67,518.47 L181.01,518.33 L181.35,518.16 L181.69,517.93 L182.02,517.87 L182.36,518.10 L182.70,518.25 L183.04,518.32 L183.37,518.40 L183.71,518.34 L184.05,518.11 L184.39,517.94 L184.72,517.89 L185.06,518.04 L185.40,518.38 L185.74,518.45 L186.07,518.30 L186.41,518.36 L186.75,518.48 L187.09,518.28 L187.42,518.02 L187.76,517.89 L188.10,518.03 L188.44,518.27 L188.78,518.29 L189.11,518.26 L189.45,518.32 L189.79,518.42 L190.13,518.51 L190.46,518.48 L190.80,518.35 L191.14,518.24 L191.48,518.29 L191.81,518.46 L192.15,518.53 L192.49,518.48 L192.83,518.39 L193.16,518.43 L193.50,518.45 L193.84,518.41 L194.18,518.43 L194.51,518.40 L194.85,518.32 L195.19,518.30 L195.53,518.33 L195.87,518.27 L196.20,518.23 L196.54,518.24 L196.88,518.28 L197.22,518.30 L197.55,518.30 L197.89,518.41 L198.23,518.57 L198.57,518.56 L198.90,518.38 L199.24,518.29 L199.58,518.34 L199.92,518.24 L200.25,518.14 L200.59,518.21 L200.93,518.25 L201.27,518.18 L201.61,518.19 L201.94,518.24 L202.28,518.35 L202.62,518.44 L202.96,518.27 L203.29,518.03 L203.63,517.99 L203.97,517.98 L204.31,517.99 L204.64,518.19 L204.98,518.31 L205.32,518.17 L205.66,517.96 L205.99,517.88 L206.33,517.96 L206.67,518.19 L207.01,518.42 L207.34,518.48 L207.68,518.38 L208.02,518.32 L208.36,518.43 L208.70,518.50 L209.03,518.43 L209.37,518.15 L209.71,517.95 L210.05,518.04 L210.38,518.07 L210.72,518.07 L211.06,518.25 L211.40,518.39 L211.73,518.35 L212.07,518.21 L212.41,518.17 L212.75,518.20 L213.08,518.18 L213.42,518.06 L213.76,517.96 L214.10,518.03 L214.43,518.06 L214.77,518.00 L215.11,518.00 L215.45,517.96 L215.79,517.93 L216.12,517.90 L216.46,517.95 L216.80,518.15 L217.14,518.25 L217.47,518.14 L217.81,517.95 L218.15,517.83 L218.49,517.85 L218.82,518.00 L219.16,517.98 L219.50,517.91 L219.84,517.94 L220.17,518.08 L220.51,518.29 L220.85,518.31 L221.19,518.27 L221.53,518.27 L221.86,518.14 L222.20,517.97 L222.54,517.88 L222.88,518.08 L223.21,518.38 L223.55,518.40 L223.89,518.18 L224.23,517.96 L224.56,517.93 L224.90,517.98 L225.24,517.97 L225.58,517.94 L225.91,517.92 L226.25,517.84 L226.59,517.72 L226.93,517.76 L227.26,517.96 L227.60,518.16 L227.94,518.33 L228.28,518.23 L228.62,517.85 L228.95,517.69 L229.29,517.73 L229.63,517.60 L229.97,517.66 L230.30,517.99 L230.64,518.08 L230.98,517.79 L231.32,517.48 L231.65,517.39 L231.99,517.53 L232.33,517.80 L232.67,517.98 L233.00,518.04 L233.34,518.12 L233.68,518.19 L234.02,518.07 L234.35,517.90 L234.69,517.90 L235.03,517.84 L235.37,517.57 L235.71,517.41 L236.04,517.55 L236.38,517.89 L236.72,518.05 L237.06,517.91 L237.39,517.94 L237.73,518.14 L238.07,518.20 L238.41,518.13 L238.74,518.20 L239.08,518.19 L239.42,518.00 L239.76,517.94 L240.09,518.04 L240.43,518.09 L240.77,518.06 L241.11,517.90 L241.44,517.83 L241.78,517.83 L242.12,517.71 L242.46,517.62 L242.80,517.87 L243.13,518.31 L243.47,518.47 L243.81,518.21 L244.15,517.92 L244.48,517.61 L244.82,517.41 L245.16,517.55 L245.50,517.73 L245.83,517.74 L246.17,517.80 L246.51,517.92 L246.85,518.09 L247.18,518.13 L247.52,517.82 L247.86,517.62 L248.20,517.72 L248.53,517.71 L248.87,517.62 L249.21,517.67 L249.55,517.72 L249.89,517.75 L250.22,517.66 L250.56,517.62 L250.90,518.05 L251.24,518.39 L251.57,518.15 L251.91,517.82 L252.25,517.80 L252.59,518.01 L252.92,518.37 L253.26,518.60 L253.60,518.60 L253.94,518.50 L254.27,518.33 L254.61,518.05 L254.95,517.91 L255.29,517.79 L255.63,517.47 L255.96,517.41 L256.30,517.67 L256.64,517.90 L256.98,517.91 L257.31,517.95 L257.65,517.84 L257.99,517.59 L258.33,517.40 L258.66,517.40 L259.00,517.68 L259.34,517.75 L259.68,517.41 L260.01,517.26 L260.35,517.54 L260.69,517.83 L261.03,517.91 L261.36,517.86 L261.70,517.69 L262.04,517.56 L262.38,517.66 L262.72,518.05 L263.05,518.32 L263.39,518.11 L263.73,517.93 L264.07,518.04 L264.40,518.12 L264.74,518.12 L265.08,518.14 L265.42,518.25 L265.75,518.23 L266.09,517.97 L266.43,517.58 L266.77,517.59 L267.10,517.87 L267.44,517.92 L267.78,517.77 L268.12,517.67 L268.45,517.69 L268.79,517.70 L269.13,517.56 L269.47,517.45 L269.81,517.64 L270.14,517.92 L270.48,517.85 L270.82,517.55 L271.16,517.59 L271.49,517.95 L271.83,518.23 L272.17,518.38 L272.51,518.51 L272.84,518.29 L273.18,518.03 L273.52,517.80 L273.86,517.40 L274.19,517.25 L274.53,517.49 L274.87,517.61 L275.21,517.41 L275.55,517.18 L275.88,517.29 L276.22,517.62 L276.56,517.70 L276.90,517.40 L277.23,517.25 L277.57,517.46 L277.91,517.64 L278.25,517.67 L278.58,517.77 L278.92,517.83 L279.26,517.69 L279.60,517.40 L279.93,517.33 L280.27,517.56 L280.61,517.55 L280.95,517.37 L281.28,517.44 L281.62,517.58 L281.96,517.57 L282.30,517.54 L282.64,517.53 L282.97,517.40 L283.31,517.24 L283.65,517.31 L283.99,517.38 L284.32,517.51 L284.66,517.74 L285.00,517.86 L285.34,517.75 L285.67,517.36 L286.01,517.10 L286.35,517.19 L286.69,517.15 L287.02,516.91 L287.36,516.79 L287.70,516.62 L288.04,516.60 L288.37,516.82 L288.71,516.83 L289.05,516.86 L289.39,516.90 L289.73,516.56 L290.06,516.18 L290.40,515.95 L290.74,515.86 L291.08,515.79 L291.41,515.66 L291.75,515.54 L292.09,515.31 L292.43,514.98 L292.76,514.65 L293.10,514.31 L293.44,514.02 L293.78,513.70 L294.11,513.36 L294.45,512.96 L294.79,512.55 L295.13,512.15 L295.46,511.65 L295.80,511.06 L296.14,510.40 L296.48,509.73 L296.82,509.13 L297.15,508.50 L297.49,507.69 L297.83,506.74 L298.17,505.80 L298.50,504.79 L298.84,503.68 L299.18,502.56 L299.52,501.43 L299.85,500.19 L300.19,498.81 L300.53,497.34 L300.87,495.86 L301.20,494.32 L301.54,492.57 L301.88,490.68 L302.22,488.70 L302.56,486.64 L302.89,484.44 L303.23,482.05 L303.57,479.56 L303.91,477.01 L304.24,474.37 L304.58,471.57 L304.92,468.60 L305.26,465.55 L305.59,462.36 L305.93,458.94 L306.27,455.33 L306.61,451.64 L306.94,447.83 L307.28,443.80 L307.62,439.59 L307.96,435.28 L308.29,430.83 L308.63,426.22 L308.97,421.41 L309.31,416.44 L309.65,411.35 L309.98,406.08 L310.32,400.66 L310.66,395.18 L311.00,389.59 L311.33,383.85 L311.67,377.95 L312.01,371.85 L312.35,365.65 L312.68,359.38 L313.02,352.97 L313.36,346.42 L313.70,339.80 L314.03,333.21 L314.37,326.58 L314.71,319.77 L315.05,312.84 L315.38,305.91 L315.72,299.03 L316.06,292.15 L316.40,285.22 L316.74,278.28 L317.07,271.38 L317.41,264.48 L317.75,257.60 L318.09,250.74 L318.42,243.88 L318.76,237.12 L319.10,230.55 L319.44,224.50 L319.77,218.53 L320.11,212.74 L320.45,207.23 L320.79,201.87 L321.12,196.68 L321.46,191.77 L321.80,187.05 L322.14,182.42 L322.47,177.80 L322.81,173.28 L323.15,168.95 L323.49,164.74 L323.83,160.55 L324.16,156.42 L324.50,152.45 L324.84,148.63 L325.18,144.87 L325.51,141.11 L325.85,137.45 L326.19,133.79 L326.53,129.78 L326.86,125.42 L327.20,120.69 L327.54,115.74 L327.88,110.76 L328.21,105.81 L328.55,101.09 L328.89,96.83 L329.23,93.27 L329.56,90.81 L329.90,89.73 L330.24,91.63 L330.58,94.65 L330.92,98.73 L331.25,103.66 L331.59,109.24 L331.93,115.40 L332.27,122.04 L332.60,129.06 L332.94,136.43 L333.28,143.98 L333.62,151.98 L333.95,160.54 L334.29,169.43 L334.63,178.35 L334.97,187.15 L335.30,195.72 L335.64,204.36 L335.98,213.14 L336.32,222.07 L336.66,231.02 L336.99,239.91 L337.33,248.83 L337.67,257.80 L338.01,266.75 L338.34,275.64 L338.68,284.43 L339.02,293.07 L339.36,301.52 L339.69,309.77 L340.03,317.83 L340.37,325.78 L340.71,333.62 L341.04,341.19 L341.38,348.44 L341.72,355.46 L342.06,362.20 L342.39,368.57 L342.73,374.59 L343.07,380.28 L343.41,385.65 L343.75,390.69 L344.08,395.39 L344.42,399.79 L344.76,403.85 L345.10,407.53 L345.43,410.85 L345.77,413.69 L346.11,416.29 L346.45,418.60 L346.78,420.67 L347.12,422.60 L347.46,424.41 L347.80,426.12 L348.13,427.80 L348.47,429.35 L348.81,430.75 L349.15,432.29 L349.48,433.99 L349.82,435.61 L350.16,437.00 L350.50,438.01 L350.84,438.33 L351.17,437.78 L351.51,437.04 L351.85,436.05 L352.19,434.86 L352.52,433.55 L352.86,432.11 L353.20,430.60 L353.54,429.09 L353.87,427.39 L354.21,425.52 L354.55,423.62 L354.89,421.60 L355.22,419.40 L355.56,417.17 L355.90,414.98 L356.24,412.64 L356.58,410.05 L356.91,407.34 L357.25,404.42 L357.59,401.28 L357.93,398.00 L358.26,394.54 L358.60,390.87 L358.94,387.03 L359.28,382.97 L359.61,378.78 L359.95,374.41 L360.29,369.87 L360.63,365.23 L360.96,360.44 L361.30,355.44 L361.64,350.42 L361.98,345.41 L362.31,340.25 L362.65,334.94 L362.99,329.64 L363.33,324.38 L363.67,319.14 L364.00,314.13 L364.34,309.32 L364.68,304.66 L365.02,300.07 L365.35,295.60 L365.69,291.37 L366.03,287.37 L366.37,283.70 L366.70,280.45 L367.04,277.60 L367.38,275.04 L367.72,272.95 L368.05,271.50 L368.39,270.88 L368.73,270.64 L369.07,270.56 L369.40,270.65 L369.74,270.95 L370.08,271.53 L370.42,272.46 L370.76,273.73 L371.09,275.02 L371.43,276.45 L371.77,278.04 L372.11,279.70 L372.44,281.49 L372.78,283.31 L373.12,285.20 L373.46,287.21 L373.79,289.27 L374.13,291.34 L374.47,293.46 L374.81,295.59 L375.14,297.68 L375.48,299.83 L375.82,302.07 L376.16,304.34 L376.49,306.64 L376.83,308.97 L377.17,311.32 L377.51,313.63 L377.85,315.89 L378.18,318.21 L378.52,320.63 L378.86,323.15 L379.20,325.61 L379.53,327.91 L379.87,330.15 L380.21,332.52 L380.55,334.98 L380.88,337.42 L381.22,339.82 L381.56,342.20 L381.90,344.59 L382.23,346.91 L382.57,349.18 L382.91,351.46 L383.25,353.72 L383.59,355.94 L383.92,358.23 L384.26,360.55 L384.60,362.78 L384.94,364.94 L385.27,367.07 L385.61,369.18 L385.95,371.25 L386.29,373.36 L386.62,375.45 L386.96,377.41 L387.30,379.33 L387.64,381.20 L387.97,383.02 L388.31,384.89 L388.65,386.81 L388.99,388.64 L389.32,390.35 L389.66,391.98 L390.00,393.53 L390.34,395.10 L390.68,396.69 L391.01,398.30 L391.35,399.80 L391.69,401.24 L392.03,402.72 L392.36,404.15 L392.70,405.50 L393.04,406.79 L393.38,408.08 L393.71,409.38 L394.05,410.62 L394.39,411.74 L394.73,412.83 L395.06,413.99 L395.40,415.20 L395.74,416.33 L396.08,417.37 L396.41,418.41 L396.75,419.40 L397.09,420.29 L397.43,421.12 L397.77,421.97 L398.10,422.86 L398.44,423.67 L398.78,424.50 L399.12,425.31 L399.45,426.03 L399.79,426.66 L400.13,427.34 L400.47,428.10 L400.80,428.85 L401.14,429.52 L401.48,430.12 L401.82,430.66 L402.15,431.25 L402.49,431.90 L402.83,432.53 L403.17,433.08 L403.50,433.60 L403.84,434.07 L404.18,434.49 L404.52,434.93 L404.86,435.39 L405.19,435.90 L405.53,436.39 L405.87,436.83 L406.21,437.26 L406.54,437.63 L406.88,437.91 L407.22,438.14 L407.56,438.40 L407.89,438.83 L408.23,439.27 L408.57,439.57 L408.91,439.90 L409.24,440.27 L409.58,440.60 L409.92,440.88 L410.26,441.17 L410.60,441.52 L410.93,441.89 L411.27,442.22 L411.61,442.55 L411.95,442.85 L412.28,443.08 L412.62,443.25 L412.96,443.44 L413.30,443.70 L413.63,443.95 L413.97,444.19 L414.31,444.44 L414.65,444.71 L414.98,444.96 L415.32,445.19 L415.66,445.37 L416.00,445.51 L416.33,445.70 L416.67,445.92 L417.01,446.13 L417.35,446.37 L417.69,446.60 L418.02,446.77 L418.36,447.02 L418.70,447.27 L419.04,447.44 L419.37,447.54 L419.71,447.66 L420.05,447.86 L420.39,448.07 L420.72,448.16 L421.06,448.19 L421.40,448.28 L421.74,448.42 L422.07,448.55 L422.41,448.68 L422.75,448.76 L423.09,448.75 L423.42,448.74 L423.76,448.79 L424.10,448.83 L424.44,448.87 L424.78,448.91 L425.11,448.88 L425.45,448.77 L425.79,448.67 L426.13,448.61 L426.46,448.49 L426.80,448.22 L427.14,447.95 L427.48,447.75 L427.81,447.48 L428.15,447.13 L428.49,446.77 L428.83,446.40 L429.16,445.97 L429.50,445.51 L429.84,445.02 L430.18,444.49 L430.51,443.95 L430.85,443.27 L431.19,442.44 L431.53,441.55 L431.87,440.60 L432.20,439.55 L432.54,438.51 L432.88,437.55 L433.22,436.48 L433.55,435.13 L433.89,433.62 L434.23,432.12 L434.57,430.57 L434.90,428.88 L435.24,427.11 L435.58,425.26 L435.92,423.17 L436.25,420.91 L436.59,418.61 L436.93,416.27 L437.27,413.74 L437.61,410.99 L437.94,408.12 L438.28,405.17 L438.62,402.13 L438.96,398.97 L439.29,395.63 L439.63,392.05 L439.97,388.35 L440.31,384.56 L440.64,380.57 L440.98,376.41 L441.32,372.01 L441.66,367.34 L441.99,362.62 L442.33,357.88 L442.67,353.08 L443.01,348.13 L443.34,342.94 L443.68,337.57 L444.02,332.05 L444.36,326.48 L444.70,320.90 L445.03,315.24 L445.37,309.48 L445.71,303.71 L446.05,297.90 L446.38,292.04 L446.72,286.26 L447.06,280.61 L447.40,274.99 L447.73,269.45 L448.07,264.08 L448.41,258.93 L448.75,254.06 L449.08,249.46 L449.42,245.14 L449.76,241.17 L450.10,237.65 L450.43,234.68 L450.77,232.31 L451.11,230.54 L451.45,229.51 L451.79,230.27 L452.12,234.01 L452.46,239.66 L452.80,246.81 L453.14,255.22 L453.47,264.69 L453.81,274.89 L454.15,285.55 L454.49,296.45 L454.82,307.53 L455.16,318.66 L455.50,329.67 L455.84,340.48 L456.17,351.04 L456.51,361.23 L456.85,370.94 L457.19,380.15 L457.52,388.93 L457.86,397.29 L458.20,405.17 L458.54,412.61 L458.88,419.56 L459.21,425.98 L459.55,431.90 L459.89,437.43 L460.23,442.63 L460.56,447.44 L460.90,451.85 L461.24,455.82 L461.58,459.43 L461.91,462.85 L462.25,465.98 L462.59,468.80 L462.93,471.42 L463.26,473.83 L463.60,475.98 L463.94,477.91 L464.28,479.67 L464.62,481.32 L464.95,482.85 L465.29,484.21 L465.63,485.42 L465.97,486.51 L466.30,487.52 L466.64,488.43 L466.98,489.28 L467.32,490.08 L467.65,490.81 L467.99,491.51 L468.33,492.12 L468.67,492.74 L469.00,493.40 L469.34,494.00 L469.68,494.53 L470.02,495.01 L470.35,495.46 L470.69,495.79 L471.03,496.07 L471.37,496.47 L471.71,496.98 L472.04,497.45 L472.38,497.84 L472.72,498.19 L473.06,498.57 L473.39,498.90 L473.73,499.15 L474.07,499.40 L474.41,499.73 L474.74,500.03 L475.08,500.28 L475.42,500.60 L475.76,500.95 L476.09,501.25 L476.43,501.55 L476.77,501.86 L477.11,502.13 L477.44,502.39 L477.78,502.64 L478.12,502.84 L478.46,503.02 L478.80,503.26 L479.13,503.57 L479.47,503.84 L479.81,504.04 L480.15,504.22 L480.48,504.42 L480.82,504.66 L481.16,504.96 L481.50,505.22 L481.83,505.39 L482.17,505.54 L482.51,505.68 L482.85,505.86 L483.18,506.12 L483.52,506.35 L483.86,506.49 L484.20,506.64 L484.53,506.87 L484.87,507.09 L485.21,507.30 L485.55,507.51 L485.89,507.68 L486.22,507.84 L486.56,508.02 L486.90,508.16 L487.24,508.31 L487.57,508.51 L487.91,508.66 L488.25,508.83 L488.59,509.03 L488.92,509.18 L489.26,509.33 L489.60,509.44 L489.94,509.56 L490.27,509.77 L490.61,509.96 L490.95,510.06 L491.29,510.14 L491.62,510.29 L491.96,510.45 L492.30,510.60 L492.64,510.80 L492.98,510.92 L493.31,510.96 L493.65,510.97 L493.99,511.04 L494.33,511.15 L494.66,511.31 L495.00,511.49 L495.34,511.64 L495.68,511.80 L496.01,511.89 L496.35,511.93 L496.69,512.02 L497.03,512.13 L497.36,512.28 L497.70,512.45 L498.04,512.58 L498.38,512.68 L498.72,512.78 L499.05,512.84 L499.39,512.85 L499.73,512.84 L500.07,512.89 L500.40,513.06 L500.74,513.24 L501.08,513.35 L501.42,513.41 L501.75,513.47 L502.09,513.55 L502.43,513.64 L502.77,513.74 L503.10,513.89 L503.44,514.00 L503.78,514.03 L504.12,514.04 L504.45,514.05 L504.79,514.09 L505.13,514.07 L505.47,514.30 L505.81,514.51 L506.14,514.44 L506.48,514.34 L506.82,514.41 L507.16,514.54 L507.49,514.53 L507.83,514.43 L508.17,514.32 L508.51,514.36 L508.84,514.71 L509.18,515.13 L509.52,515.08 L509.86,514.63 L510.19,514.58 L510.53,515.04 L510.87,515.47 L511.21,515.40 L511.54,514.98 L511.88,514.80 L512.22,515.12 L512.56,515.62 L512.90,515.82 L513.23,515.85 L513.57,515.90 L513.91,515.86 L514.25,515.90 L514.58,516.01 L514.92,516.01 L515.26,515.96 L515.60,515.93 L515.93,515.80 L516.27,515.63 L516.61,515.77 L516.95,515.90 L517.28,515.78 L517.62,515.71 L517.96,515.69 L518.30,515.64 L518.63,515.84 L518.97,516.06 L519.31,516.13 L519.65,516.31 L519.99,516.51 L520.32,516.34 L520.66,516.04 L521.00,516.18 L521.34,516.35 L521.67,516.21 L522.01,516.16 L522.35,516.26 L522.69,516.28 L523.02,516.28 L523.36,516.52 L523.70,516.64 L524.04,516.53 L524.37,516.45 L524.71,516.25 L525.05,516.15 L525.39,516.29 L525.73,516.46 L526.06,516.65 L526.40,516.81 L526.74,517.06 L527.08,517.19 L527.41,517.12 L527.75,516.90 L528.09,516.45 L528.43,516.26 L528.76,516.34 L529.10,516.40 L529.44,516.25 L529.78,516.29 L530.11,516.77 L530.45,517.04 L530.79,517.04 L531.13,516.88 L531.46,516.60 L531.80,516.53 L532.14,516.84 L532.48,517.05 L532.82,517.00 L533.15,516.79 L533.49,516.58 L533.83,516.70 L534.17,516.98 L534.50,517.06 L534.84,517.01 L535.18,516.95 L535.52,516.93 L535.85,516.97 L536.19,516.84 L536.53,516.51 L536.87,516.42 L537.20,516.74 L537.54,517.07 L537.88,517.31 L538.22,517.31 L538.55,517.16 L538.89,516.98 L539.23,516.67 L539.57,516.54 L539.91,516.49 L540.24,516.45 L540.58,516.52 L540.92,516.59 L541.26,516.58 L541.59,516.57 L541.93,516.75 L542.27,517.10 L542.61,517.43 L542.94,517.45 L543.28,517.17 L543.62,517.04 L543.96,517.12 L544.29,517.22 L544.63,517.27 L544.97,517.20 L545.31,517.00 L545.64,516.97 L545.98,517.03 L546.32,516.94 L546.66,516.90 L547.00,517.02 L547.33,517.03 L547.67,516.95 L548.01,516.99 L548.35,517.21 L548.68,517.44 L549.02,517.47 L549.36,517.46 L549.70,517.52 L550.03,517.47 L550.37,517.36 L550.71,517.18 L551.05,517.07 L551.38,517.21 L551.72,517.32 L552.06,517.36 L552.40,517.46 L552.74,517.53 L553.07,517.34 L553.41,517.07 L553.75,517.06 L554.09,517.25 L554.42,517.30 L554.76,517.27 L555.10,517.37 L555.44,517.47 L555.77,517.49 L556.11,517.43 L556.45,517.32 L556.79,517.20 L557.12,517.08 L557.46,517.07 L557.80,517.18 L558.14,517.32 L558.47,517.59 L558.81,517.73 L559.15,517.50 L559.49,517.42 L559.83,517.60 L560.16,517.62 L560.50,517.46 L560.84,517.43 L561.18,517.60 L561.51,517.61 L561.85,517.39 L562.19,517.26 L562.53,517.28 L562.86,517.46 L563.20,517.75 L563.54,517.76 L563.88,517.44 L564.21,517.10 L564.55,516.97 L564.89,517.09 L565.23,517.20 L565.56,517.20 L565.90,517.33 L566.24,517.57 L566.58,517.68 L566.92,517.60 L567.25,517.48 L567.59,517.54 L567.93,517.61 L568.27,517.57 L568.60,517.66 L568.94,517.93 L569.28,518.00 L569.62,517.54 L569.95,517.14 L570.29,517.17 L570.63,517.34 L570.97,517.52 L571.30,517.41 L571.64,517.13 L571.98,517.15 L572.32,517.25 L572.65,517.43 L572.99,517.63 L573.33,517.68 L573.67,517.60 L574.01,517.48 L574.34,517.40 L574.68,517.44 L575.02,517.53 L575.36,517.39 L575.69,517.13 L576.03,517.01 L576.37,517.05 L576.71,517.31 L577.04,517.65 L577.38,517.68 L577.72,517.40 L578.06,517.16 L578.39,517.10 L578.73,517.09 L579.07,517.02 L579.41,517.07 L579.75,517.17 L580.08,517.27 L580.42,517.35 L580.76,517.25 L581.10,517.24 L581.43,517.46 L581.77,517.39 L582.11,517.15 L582.45,517.12 L582.78,517.32 L583.12,517.51 L583.46,517.50 L583.80,517.38 L584.13,517.30 L584.47,517.28 L584.81,517.41 L585.15,517.58 L585.48,517.62 L585.82,517.39 L586.16,517.11 L586.50,517.01 L586.84,517.07 L587.17,517.33 L587.51,517.57 L587.85,517.49 L588.19,517.39 L588.52,517.42 L588.86,517.50 L589.20,517.61 L589.54,517.67 L589.87,517.75 L590.21,517.83 L590.55,517.77 L590.89,517.71 L591.22,517.69 L591.56,517.73 L591.90,517.91 L592.24,518.00 L592.57,517.72 L592.91,517.29 L593.25,517.28 L593.59,517.65 L593.93,517.88 L594.26,517.80 L594.60,517.66 L594.94,517.67 L595.28,517.74 L595.61,517.61 L595.95,517.45 L596.29,517.43 L596.63,517.42 L596.96,517.45 L597.30,517.42 L597.64,517.30 L597.98,517.33 L598.31,517.59 L598.65,517.85 L598.99,517.96 L599.33,517.94 L599.66,517.86 L600.00,517.80 L600.34,517.65 L600.68,517.49 L601.02,517.62 L601.35,517.96 L601.69,518.08 L602.03,517.97 L602.37,517.67 L602.70,517.50 L603.04,517.58 L603.38,517.57 L603.72,517.44 L604.05,517.39 L604.39,517.57 L604.73,517.82 L605.07,517.89 L605.40,517.81 L605.74,517.73 L606.08,517.85 L606.42,518.01 L606.76,517.87 L607.09,517.66 L607.43,517.58 L607.77,517.61 L608.11,517.75 L608.44,517.87 L608.78,517.89 L609.12,517.90 L609.46,517.82 L609.79,517.70 L610.13,517.62 L610.47,517.59 L610.81,517.58 L611.14,517.68 L611.48,517.75 L611.82,517.75 L612.16,517.83 L612.49,517.99 L612.83,518.02 L613.17,517.83 L613.51,517.65 L613.85,517.68 L614.18,517.94 L614.52,518.09 L614.86,517.92 L615.20,517.69 L615.53,517.63 L615.87,517.69 L616.21,517.64 L616.55,517.64 L616.88,517.85 L617.22,518.00 L617.56,517.97 L617.90,517.88 L618.23,517.75 L618.57,517.61 L618.91,517.63 L619.25,517.76 L619.58,517.91 L619.92,518.08 L620.26,517.96 L620.60,517.84 L620.94,517.81 L621.27,517.84 L621.61,517.89 L621.95,517.87 L622.29,517.95 L622.62,517.93 L622.96,517.75 L623.30,517.76 L623.64,517.95 L623.97,517.99 L624.31,517.87 L624.65,517.80 L624.99,518.04 L625.32,518.30 L625.66,518.22 L626.00,518.05 L626.34,517.88 L626.67,517.72 L627.01,517.69 L627.35,517.76 L627.69,517.82 L628.03,517.79 L628.36,517.84 L628.70,518.00 L629.04,518.07 L629.38,517.99 L629.71,517.97 L630.05,517.94 L630.39,517.78 L630.73,517.82 L631.06,517.85 L631.40,517.72 L631.74,517.56 L632.08,517.56 L632.41,517.71 L632.75,517.64 L633.09,517.64 L633.43,517.90 L633.77,518.08 L634.10,518.06 L634.44,517.86 L634.78,517.72 L635.12,517.75 L635.45,517.95 L635.79,518.16 L636.13,518.12 L636.47,518.07 L636.80,518.13 L637.14,518.07 L637.48,518.04 L637.82,518.15 L638.15,518.13 L638.49,517.86 L638.83,517.71 L639.17,517.73 L639.50,517.83 L639.84,517.91 L640.18,517.94 L640.52,517.87 L640.86,517.84 L641.19,518.11 L641.53,518.11 L641.87,517.73 L642.21,517.61 L642.54,517.73 L642.88,517.89 L643.22,517.99 L643.56,518.05 L643.89,517.97 L644.23,517.71 L644.57,517.49 L644.91,517.47 L645.24,517.60 L645.58,517.60 L645.92,517.52 L646.26,517.44 L646.59,517.53 L646.93,517.58 L647.27,517.51 L647.61,517.62 L647.95,517.87 L648.28,517.99 L648.62,518.01 L648.96,518.17 L649.30,518.26 L649.63,518.06 L649.97,517.77 L650.31,517.82 L650.65,517.99 L650.98,517.90 L651.32,517.76 L651.66,517.91 L652.00,517.93 L652.33,517.76 L652.67,517.77 L653.01,517.93 L653.35,518.13 L653.68,518.23 L654.02,518.23 L654.36,518.15 L654.70,518.06 L655.04,518.02 L655.37,517.89 L655.71,517.76 L656.05,517.51 L656.39,517.37 L656.72,517.54 L657.06,517.73 L657.40,517.85 L657.74,517.68 L658.07,517.52 L658.41,517.63 L658.75,517.84 L659.09,518.05 L659.42,517.97 L659.76,517.70 L660.10,517.60 L660.44,517.67 L660.78,517.84 L661.11,518.03 L661.45,518.02 L661.79,517.98 L662.13,518.00 L662.46,518.05 L662.80,518.04 L663.14,518.06 L663.48,518.26 L663.81,518.28 L664.15,518.16 L664.49,518.29 L664.83,518.34 L665.16,518.12 L665.50,517.99 L665.84,517.83 L666.18,517.67 L666.51,517.69 L666.85,517.80 L667.19,517.91 L667.53,518.02 L667.87,518.12 L668.20,518.23 L668.54,518.32 L668.88,518.23 L669.22,518.03 L669.55,518.01 L669.89,518.09 L670.23,518.05 L670.57,517.96 L670.90,517.91 L671.24,517.98 L671.58,518.14 L671.92,518.16 L672.25,518.11 L672.59,518.10 L672.93,517.85 L673.27,517.54 L673.60,517.55 L673.94,517.82 L674.28,517.97 L674.62,518.06 L674.96,518.31 L675.29,518.39 L675.63,518.23 L675.97,517.98 L676.31,517.79 L676.64,517.92 L676.98,518.21 L677.32,518.25 L677.66,518.14 L677.99,518.07 L678.33,518.19 L678.67,518.31 L679.01,518.18 L679.34,518.05 L679.68,517.97 L680.02,517.70 L680.36,517.59 L680.70,517.83 L681.03,517.92 L681.37,517.91 L681.71,518.03 L682.05,518.07 L682.38,517.99 L682.72,517.89 L683.06,517.84 L683.40,517.77 L683.73,517.69 L684.07,517.82 L684.41,517.89 L684.75,517.78 L685.08,517.87 L685.42,517.98 L685.76,517.93 L686.10,517.92 L686.43,517.95 L686.77,518.12 L687.11,518.23 L687.45,517.98 L687.79,517.76 L688.12,517.76 L688.46,517.72 L688.80,517.80 L689.14,518.25 L689.47,518.63 L689.81,518.69 L690.15,518.44 L690.49,518.11 L690.82,518.15 L691.16,518.34 L691.50,518.28 L691.84,518.13 L692.17,517.99 L692.51,517.87 L692.85,517.93 L693.19,518.20 L693.52,518.31 L693.86,518.14 L694.20,517.99 L694.54,518.00 L694.88,518.07 L695.21,517.97 L695.55,517.78 L695.89,517.68 L696.23,517.65 L696.56,517.73 L696.90,517.89 L697.24,517.81 L697.58,517.81 L697.91,518.01 L698.25,518.17 L698.59,518.26 L698.93,518.34 L699.26,518.44 L699.60,518.41 L699.94,518.29 L700.28,518.16 L700.61,517.99 L700.95,517.95 L701.29,518.00 L701.63,518.03 L701.97,518.13 L702.30,518.27 L702.64,518.26 L702.98,518.06 L703.32,517.89 L703.65,518.08 L703.99,518.43 L704.33,518.42 L704.67,518.16 L705.00,518.04 L705.34,517.99 L705.68,518.11 L706.02,518.41 L706.35,518.40 L706.69,518.19 L707.03,518.17 L707.37,518.20 L707.71,518.00 L708.04,517.66 L708.38,517.53 L708.72,517.81 L709.06,517.96 L709.39,517.92 L709.73,517.96 L710.07,518.08 L710.41,518.33 L710.74,518.34 L711.08,518.17 L711.42,518.03 L711.76,517.96 L712.09,517.98 L712.43,518.03 L712.77,518.15 L713.11,518.25 L713.44,518.18 L713.78,518.11 L714.12,517.94 L714.46,517.63 L714.80,517.61 L715.13,518.04 L715.47,518.43 L715.81,518.47 L716.15,518.30 L716.48,518.02 L716.82,517.94 L717.16,518.03 L717.50,518.04 L717.83,518.03 L718.17,518.01 L718.51,518.02 L718.85,517.99 L719.18,517.85 L719.52,517.77 L719.86,517.79 L720.20,517.68 L720.53,517.38 L720.87,517.22 L721.21,517.22 L721.55,517.26 L721.89,517.67 L722.22,518.24 L722.56,518.31 L722.90,518.15 L723.24,518.11 L723.57,518.02 L723.91,518.21 L724.25,518.52 L724.59,518.54 L724.92,518.46 L725.26,518.49 L725.60,518.41 L725.94,518.36 L726.27,518.39 L726.61,518.27 L726.95,518.16 L727.29,518.16 L727.62,518.23 L727.96,518.37 L728.0,518.5 Z" fill="url(#spec)"/><path d="M154.00,518.06 L154.34,518.16 L154.68,518.21 L155.01,518.17 L155.35,518.14 L155.69,518.21 L156.03,518.33 L156.36,518.35 L156.70,518.37 L157.04,518.42 L157.38,518.33 L157.71,518.35 L158.05,518.67 L158.39,518.66 L158.73,518.28 L159.06,518.05 L159.40,517.98 L159.74,518.03 L160.08,518.34 L160.41,518.55 L160.75,518.61 L161.09,518.57 L161.43,518.44 L161.77,518.28 L162.10,518.15 L162.44,518.15 L162.78,518.22 L163.12,518.25 L163.45,518.33 L163.79,518.44 L164.13,518.48 L164.47,518.52 L164.80,518.46 L165.14,518.35 L165.48,518.29 L165.82,518.23 L166.15,518.19 L166.49,518.19 L166.83,518.35 L167.17,518.44 L167.50,518.42 L167.84,518.47 L168.18,518.35 L168.52,518.20 L168.86,518.08 L169.19,518.05 L169.53,518.19 L169.87,518.42 L170.21,518.56 L170.54,518.50 L170.88,518.29 L171.22,518.07 L171.56,518.06 L171.89,518.25 L172.23,518.28 L172.57,518.25 L172.91,518.21 L173.24,518.21 L173.58,518.29 L173.92,518.28 L174.26,518.35 L174.60,518.40 L174.93,518.28 L175.27,518.37 L175.61,518.45 L175.95,518.38 L176.28,518.32 L176.62,518.42 L176.96,518.55 L177.30,518.56 L177.63,518.39 L177.97,518.20 L178.31,518.19 L178.65,518.24 L178.98,518.29 L179.32,518.41 L179.66,518.50 L180.00,518.42 L180.33,518.42 L180.67,518.47 L181.01,518.33 L181.35,518.16 L181.69,517.93 L182.02,517.87 L182.36,518.10 L182.70,518.25 L183.04,518.32 L183.37,518.40 L183.71,518.34 L184.05,518.11 L184.39,517.94 L184.72,517.89 L185.06,518.04 L185.40,518.38 L185.74,518.45 L186.07,518.30 L186.41,518.36 L186.75,518.48 L187.09,518.28 L187.42,518.02 L187.76,517.89 L188.10,518.03 L188.44,518.27 L188.78,518.29 L189.11,518.26 L189.45,518.32 L189.79,518.42 L190.13,518.51 L190.46,518.48 L190.80,518.35 L191.14,518.24 L191.48,518.29 L191.81,518.46 L192.15,518.53 L192.49,518.48 L192.83,518.39 L193.16,518.43 L193.50,518.45 L193.84,518.41 L194.18,518.43 L194.51,518.40 L194.85,518.32 L195.19,518.30 L195.53,518.33 L195.87,518.27 L196.20,518.23 L196.54,518.24 L196.88,518.28 L197.22,518.30 L197.55,518.30 L197.89,518.41 L198.23,518.57 L198.57,518.56 L198.90,518.38 L199.24,518.29 L199.58,518.34 L199.92,518.24 L200.25,518.14 L200.59,518.21 L200.93,518.25 L201.27,518.18 L201.61,518.19 L201.94,518.24 L202.28,518.35 L202.62,518.44 L202.96,518.27 L203.29,518.03 L203.63,517.99 L203.97,517.98 L204.31,517.99 L204.64,518.19 L204.98,518.31 L205.32,518.17 L205.66,517.96 L205.99,517.88 L206.33,517.96 L206.67,518.19 L207.01,518.42 L207.34,518.48 L207.68,518.38 L208.02,518.32 L208.36,518.43 L208.70,518.50 L209.03,518.43 L209.37,518.15 L209.71,517.95 L210.05,518.04 L210.38,518.07 L210.72,518.07 L211.06,518.25 L211.40,518.39 L211.73,518.35 L212.07,518.21 L212.41,518.17 L212.75,518.20 L213.08,518.18 L213.42,518.06 L213.76,517.96 L214.10,518.03 L214.43,518.06 L214.77,518.00 L215.11,518.00 L215.45,517.96 L215.79,517.93 L216.12,517.90 L216.46,517.95 L216.80,518.15 L217.14,518.25 L217.47,518.14 L217.81,517.95 L218.15,517.83 L218.49,517.85 L218.82,518.00 L219.16,517.98 L219.50,517.91 L219.84,517.94 L220.17,518.08 L220.51,518.29 L220.85,518.31 L221.19,518.27 L221.53,518.27 L221.86,518.14 L222.20,517.97 L222.54,517.88 L222.88,518.08 L223.21,518.38 L223.55,518.40 L223.89,518.18 L224.23,517.96 L224.56,517.93 L224.90,517.98 L225.24,517.97 L225.58,517.94 L225.91,517.92 L226.25,517.84 L226.59,517.72 L226.93,517.76 L227.26,517.96 L227.60,518.16 L227.94,518.33 L228.28,518.23 L228.62,517.85 L228.95,517.69 L229.29,517.73 L229.63,517.60 L229.97,517.66 L230.30,517.99 L230.64,518.08 L230.98,517.79 L231.32,517.48 L231.65,517.39 L231.99,517.53 L232.33,517.80 L232.67,517.98 L233.00,518.04 L233.34,518.12 L233.68,518.19 L234.02,518.07 L234.35,517.90 L234.69,517.90 L235.03,517.84 L235.37,517.57 L235.71,517.41 L236.04,517.55 L236.38,517.89 L236.72,518.05 L237.06,517.91 L237.39,517.94 L237.73,518.14 L238.07,518.20 L238.41,518.13 L238.74,518.20 L239.08,518.19 L239.42,518.00 L239.76,517.94 L240.09,518.04 L240.43,518.09 L240.77,518.06 L241.11,517.90 L241.44,517.83 L241.78,517.83 L242.12,517.71 L242.46,517.62 L242.80,517.87 L243.13,518.31 L243.47,518.47 L243.81,518.21 L244.15,517.92 L244.48,517.61 L244.82,517.41 L245.16,517.55 L245.50,517.73 L245.83,517.74 L246.17,517.80 L246.51,517.92 L246.85,518.09 L247.18,518.13 L247.52,517.82 L247.86,517.62 L248.20,517.72 L248.53,517.71 L248.87,517.62 L249.21,517.67 L249.55,517.72 L249.89,517.75 L250.22,517.66 L250.56,517.62 L250.90,518.05 L251.24,518.39 L251.57,518.15 L251.91,517.82 L252.25,517.80 L252.59,518.01 L252.92,518.37 L253.26,518.60 L253.60,518.60 L253.94,518.50 L254.27,518.33 L254.61,518.05 L254.95,517.91 L255.29,517.79 L255.63,517.47 L255.96,517.41 L256.30,517.67 L256.64,517.90 L256.98,517.91 L257.31,517.95 L257.65,517.84 L257.99,517.59 L258.33,517.40 L258.66,517.40 L259.00,517.68 L259.34,517.75 L259.68,517.41 L260.01,517.26 L260.35,517.54 L260.69,517.83 L261.03,517.91 L261.36,517.86 L261.70,517.69 L262.04,517.56 L262.38,517.66 L262.72,518.05 L263.05,518.32 L263.39,518.11 L263.73,517.93 L264.07,518.04 L264.40,518.12 L264.74,518.12 L265.08,518.14 L265.42,518.25 L265.75,518.23 L266.09,517.97 L266.43,517.58 L266.77,517.59 L267.10,517.87 L267.44,517.92 L267.78,517.77 L268.12,517.67 L268.45,517.69 L268.79,517.70 L269.13,517.56 L269.47,517.45 L269.81,517.64 L270.14,517.92 L270.48,517.85 L270.82,517.55 L271.16,517.59 L271.49,517.95 L271.83,518.23 L272.17,518.38 L272.51,518.51 L272.84,518.29 L273.18,518.03 L273.52,517.80 L273.86,517.40 L274.19,517.25 L274.53,517.49 L274.87,517.61 L275.21,517.41 L275.55,517.18 L275.88,517.29 L276.22,517.62 L276.56,517.70 L276.90,517.40 L277.23,517.25 L277.57,517.46 L277.91,517.64 L278.25,517.67 L278.58,517.77 L278.92,517.83 L279.26,517.69 L279.60,517.40 L279.93,517.33 L280.27,517.56 L280.61,517.55 L280.95,517.37 L281.28,517.44 L281.62,517.58 L281.96,517.57 L282.30,517.54 L282.64,517.53 L282.97,517.40 L283.31,517.24 L283.65,517.31 L283.99,517.38 L284.32,517.51 L284.66,517.74 L285.00,517.86 L285.34,517.75 L285.67,517.36 L286.01,517.10 L286.35,517.19 L286.69,517.15 L287.02,516.91 L287.36,516.79 L287.70,516.62 L288.04,516.60 L288.37,516.82 L288.71,516.83 L289.05,516.86 L289.39,516.90 L289.73,516.56 L290.06,516.18 L290.40,515.95 L290.74,515.86 L291.08,515.79 L291.41,515.66 L291.75,515.54 L292.09,515.31 L292.43,514.98 L292.76,514.65 L293.10,514.31 L293.44,514.02 L293.78,513.70 L294.11,513.36 L294.45,512.96 L294.79,512.55 L295.13,512.15 L295.46,511.65 L295.80,511.06 L296.14,510.40 L296.48,509.73 L296.82,509.13 L297.15,508.50 L297.49,507.69 L297.83,506.74 L298.17,505.80 L298.50,504.79 L298.84,503.68 L299.18,502.56 L299.52,501.43 L299.85,500.19 L300.19,498.81 L300.53,497.34 L300.87,495.86 L301.20,494.32 L301.54,492.57 L301.88,490.68 L302.22,488.70 L302.56,486.64 L302.89,484.44 L303.23,482.05 L303.57,479.56 L303.91,477.01 L304.24,474.37 L304.58,471.57 L304.92,468.60 L305.26,465.55 L305.59,462.36 L305.93,458.94 L306.27,455.33 L306.61,451.64 L306.94,447.83 L307.28,443.80 L307.62,439.59 L307.96,435.28 L308.29,430.83 L308.63,426.22 L308.97,421.41 L309.31,416.44 L309.65,411.35 L309.98,406.08 L310.32,400.66 L310.66,395.18 L311.00,389.59 L311.33,383.85 L311.67,377.95 L312.01,371.85 L312.35,365.65 L312.68,359.38 L313.02,352.97 L313.36,346.42 L313.70,339.80 L314.03,333.21 L314.37,326.58 L314.71,319.77 L315.05,312.84 L315.38,305.91 L315.72,299.03 L316.06,292.15 L316.40,285.22 L316.74,278.28 L317.07,271.38 L317.41,264.48 L317.75,257.60 L318.09,250.74 L318.42,243.88 L318.76,237.12 L319.10,230.55 L319.44,224.50 L319.77,218.53 L320.11,212.74 L320.45,207.23 L320.79,201.87 L321.12,196.68 L321.46,191.77 L321.80,187.05 L322.14,182.42 L322.47,177.80 L322.81,173.28 L323.15,168.95 L323.49,164.74 L323.83,160.55 L324.16,156.42 L324.50,152.45 L324.84,148.63 L325.18,144.87 L325.51,141.11 L325.85,137.45 L326.19,133.79 L326.53,129.78 L326.86,125.42 L327.20,120.69 L327.54,115.74 L327.88,110.76 L328.21,105.81 L328.55,101.09 L328.89,96.83 L329.23,93.27 L329.56,90.81 L329.90,89.73 L330.24,91.63 L330.58,94.65 L330.92,98.73 L331.25,103.66 L331.59,109.24 L331.93,115.40 L332.27,122.04 L332.60,129.06 L332.94,136.43 L333.28,143.98 L333.62,151.98 L333.95,160.54 L334.29,169.43 L334.63,178.35 L334.97,187.15 L335.30,195.72 L335.64,204.36 L335.98,213.14 L336.32,222.07 L336.66,231.02 L336.99,239.91 L337.33,248.83 L337.67,257.80 L338.01,266.75 L338.34,275.64 L338.68,284.43 L339.02,293.07 L339.36,301.52 L339.69,309.77 L340.03,317.83 L340.37,325.78 L340.71,333.62 L341.04,341.19 L341.38,348.44 L341.72,355.46 L342.06,362.20 L342.39,368.57 L342.73,374.59 L343.07,380.28 L343.41,385.65 L343.75,390.69 L344.08,395.39 L344.42,399.79 L344.76,403.85 L345.10,407.53 L345.43,410.85 L345.77,413.69 L346.11,416.29 L346.45,418.60 L346.78,420.67 L347.12,422.60 L347.46,424.41 L347.80,426.12 L348.13,427.80 L348.47,429.35 L348.81,430.75 L349.15,432.29 L349.48,433.99 L349.82,435.61 L350.16,437.00 L350.50,438.01 L350.84,438.33 L351.17,437.78 L351.51,437.04 L351.85,436.05 L352.19,434.86 L352.52,433.55 L352.86,432.11 L353.20,430.60 L353.54,429.09 L353.87,427.39 L354.21,425.52 L354.55,423.62 L354.89,421.60 L355.22,419.40 L355.56,417.17 L355.90,414.98 L356.24,412.64 L356.58,410.05 L356.91,407.34 L357.25,404.42 L357.59,401.28 L357.93,398.00 L358.26,394.54 L358.60,390.87 L358.94,387.03 L359.28,382.97 L359.61,378.78 L359.95,374.41 L360.29,369.87 L360.63,365.23 L360.96,360.44 L361.30,355.44 L361.64,350.42 L361.98,345.41 L362.31,340.25 L362.65,334.94 L362.99,329.64 L363.33,324.38 L363.67,319.14 L364.00,314.13 L364.34,309.32 L364.68,304.66 L365.02,300.07 L365.35,295.60 L365.69,291.37 L366.03,287.37 L366.37,283.70 L366.70,280.45 L367.04,277.60 L367.38,275.04 L367.72,272.95 L368.05,271.50 L368.39,270.88 L368.73,270.64 L369.07,270.56 L369.40,270.65 L369.74,270.95 L370.08,271.53 L370.42,272.46 L370.76,273.73 L371.09,275.02 L371.43,276.45 L371.77,278.04 L372.11,279.70 L372.44,281.49 L372.78,283.31 L373.12,285.20 L373.46,287.21 L373.79,289.27 L374.13,291.34 L374.47,293.46 L374.81,295.59 L375.14,297.68 L375.48,299.83 L375.82,302.07 L376.16,304.34 L376.49,306.64 L376.83,308.97 L377.17,311.32 L377.51,313.63 L377.85,315.89 L378.18,318.21 L378.52,320.63 L378.86,323.15 L379.20,325.61 L379.53,327.91 L379.87,330.15 L380.21,332.52 L380.55,334.98 L380.88,337.42 L381.22,339.82 L381.56,342.20 L381.90,344.59 L382.23,346.91 L382.57,349.18 L382.91,351.46 L383.25,353.72 L383.59,355.94 L383.92,358.23 L384.26,360.55 L384.60,362.78 L384.94,364.94 L385.27,367.07 L385.61,369.18 L385.95,371.25 L386.29,373.36 L386.62,375.45 L386.96,377.41 L387.30,379.33 L387.64,381.20 L387.97,383.02 L388.31,384.89 L388.65,386.81 L388.99,388.64 L389.32,390.35 L389.66,391.98 L390.00,393.53 L390.34,395.10 L390.68,396.69 L391.01,398.30 L391.35,399.80 L391.69,401.24 L392.03,402.72 L392.36,404.15 L392.70,405.50 L393.04,406.79 L393.38,408.08 L393.71,409.38 L394.05,410.62 L394.39,411.74 L394.73,412.83 L395.06,413.99 L395.40,415.20 L395.74,416.33 L396.08,417.37 L396.41,418.41 L396.75,419.40 L397.09,420.29 L397.43,421.12 L397.77,421.97 L398.10,422.86 L398.44,423.67 L398.78,424.50 L399.12,425.31 L399.45,426.03 L399.79,426.66 L400.13,427.34 L400.47,428.10 L400.80,428.85 L401.14,429.52 L401.48,430.12 L401.82,430.66 L402.15,431.25 L402.49,431.90 L402.83,432.53 L403.17,433.08 L403.50,433.60 L403.84,434.07 L404.18,434.49 L404.52,434.93 L404.86,435.39 L405.19,435.90 L405.53,436.39 L405.87,436.83 L406.21,437.26 L406.54,437.63 L406.88,437.91 L407.22,438.14 L407.56,438.40 L407.89,438.83 L408.23,439.27 L408.57,439.57 L408.91,439.90 L409.24,440.27 L409.58,440.60 L409.92,440.88 L410.26,441.17 L410.60,441.52 L410.93,441.89 L411.27,442.22 L411.61,442.55 L411.95,442.85 L412.28,443.08 L412.62,443.25 L412.96,443.44 L413.30,443.70 L413.63,443.95 L413.97,444.19 L414.31,444.44 L414.65,444.71 L414.98,444.96 L415.32,445.19 L415.66,445.37 L416.00,445.51 L416.33,445.70 L416.67,445.92 L417.01,446.13 L417.35,446.37 L417.69,446.60 L418.02,446.77 L418.36,447.02 L418.70,447.27 L419.04,447.44 L419.37,447.54 L419.71,447.66 L420.05,447.86 L420.39,448.07 L420.72,448.16 L421.06,448.19 L421.40,448.28 L421.74,448.42 L422.07,448.55 L422.41,448.68 L422.75,448.76 L423.09,448.75 L423.42,448.74 L423.76,448.79 L424.10,448.83 L424.44,448.87 L424.78,448.91 L425.11,448.88 L425.45,448.77 L425.79,448.67 L426.13,448.61 L426.46,448.49 L426.80,448.22 L427.14,447.95 L427.48,447.75 L427.81,447.48 L428.15,447.13 L428.49,446.77 L428.83,446.40 L429.16,445.97 L429.50,445.51 L429.84,445.02 L430.18,444.49 L430.51,443.95 L430.85,443.27 L431.19,442.44 L431.53,441.55 L431.87,440.60 L432.20,439.55 L432.54,438.51 L432.88,437.55 L433.22,436.48 L433.55,435.13 L433.89,433.62 L434.23,432.12 L434.57,430.57 L434.90,428.88 L435.24,427.11 L435.58,425.26 L435.92,423.17 L436.25,420.91 L436.59,418.61 L436.93,416.27 L437.27,413.74 L437.61,410.99 L437.94,408.12 L438.28,405.17 L438.62,402.13 L438.96,398.97 L439.29,395.63 L439.63,392.05 L439.97,388.35 L440.31,384.56 L440.64,380.57 L440.98,376.41 L441.32,372.01 L441.66,367.34 L441.99,362.62 L442.33,357.88 L442.67,353.08 L443.01,348.13 L443.34,342.94 L443.68,337.57 L444.02,332.05 L444.36,326.48 L444.70,320.90 L445.03,315.24 L445.37,309.48 L445.71,303.71 L446.05,297.90 L446.38,292.04 L446.72,286.26 L447.06,280.61 L447.40,274.99 L447.73,269.45 L448.07,264.08 L448.41,258.93 L448.75,254.06 L449.08,249.46 L449.42,245.14 L449.76,241.17 L450.10,237.65 L450.43,234.68 L450.77,232.31 L451.11,230.54 L451.45,229.51 L451.79,230.27 L452.12,234.01 L452.46,239.66 L452.80,246.81 L453.14,255.22 L453.47,264.69 L453.81,274.89 L454.15,285.55 L454.49,296.45 L454.82,307.53 L455.16,318.66 L455.50,329.67 L455.84,340.48 L456.17,351.04 L456.51,361.23 L456.85,370.94 L457.19,380.15 L457.52,388.93 L457.86,397.29 L458.20,405.17 L458.54,412.61 L458.88,419.56 L459.21,425.98 L459.55,431.90 L459.89,437.43 L460.23,442.63 L460.56,447.44 L460.90,451.85 L461.24,455.82 L461.58,459.43 L461.91,462.85 L462.25,465.98 L462.59,468.80 L462.93,471.42 L463.26,473.83 L463.60,475.98 L463.94,477.91 L464.28,479.67 L464.62,481.32 L464.95,482.85 L465.29,484.21 L465.63,485.42 L465.97,486.51 L466.30,487.52 L466.64,488.43 L466.98,489.28 L467.32,490.08 L467.65,490.81 L467.99,491.51 L468.33,492.12 L468.67,492.74 L469.00,493.40 L469.34,494.00 L469.68,494.53 L470.02,495.01 L470.35,495.46 L470.69,495.79 L471.03,496.07 L471.37,496.47 L471.71,496.98 L472.04,497.45 L472.38,497.84 L472.72,498.19 L473.06,498.57 L473.39,498.90 L473.73,499.15 L474.07,499.40 L474.41,499.73 L474.74,500.03 L475.08,500.28 L475.42,500.60 L475.76,500.95 L476.09,501.25 L476.43,501.55 L476.77,501.86 L477.11,502.13 L477.44,502.39 L477.78,502.64 L478.12,502.84 L478.46,503.02 L478.80,503.26 L479.13,503.57 L479.47,503.84 L479.81,504.04 L480.15,504.22 L480.48,504.42 L480.82,504.66 L481.16,504.96 L481.50,505.22 L481.83,505.39 L482.17,505.54 L482.51,505.68 L482.85,505.86 L483.18,506.12 L483.52,506.35 L483.86,506.49 L484.20,506.64 L484.53,506.87 L484.87,507.09 L485.21,507.30 L485.55,507.51 L485.89,507.68 L486.22,507.84 L486.56,508.02 L486.90,508.16 L487.24,508.31 L487.57,508.51 L487.91,508.66 L488.25,508.83 L488.59,509.03 L488.92,509.18 L489.26,509.33 L489.60,509.44 L489.94,509.56 L490.27,509.77 L490.61,509.96 L490.95,510.06 L491.29,510.14 L491.62,510.29 L491.96,510.45 L492.30,510.60 L492.64,510.80 L492.98,510.92 L493.31,510.96 L493.65,510.97 L493.99,511.04 L494.33,511.15 L494.66,511.31 L495.00,511.49 L495.34,511.64 L495.68,511.80 L496.01,511.89 L496.35,511.93 L496.69,512.02 L497.03,512.13 L497.36,512.28 L497.70,512.45 L498.04,512.58 L498.38,512.68 L498.72,512.78 L499.05,512.84 L499.39,512.85 L499.73,512.84 L500.07,512.89 L500.40,513.06 L500.74,513.24 L501.08,513.35 L501.42,513.41 L501.75,513.47 L502.09,513.55 L502.43,513.64 L502.77,513.74 L503.10,513.89 L503.44,514.00 L503.78,514.03 L504.12,514.04 L504.45,514.05 L504.79,514.09 L505.13,514.07 L505.47,514.30 L505.81,514.51 L506.14,514.44 L506.48,514.34 L506.82,514.41 L507.16,514.54 L507.49,514.53 L507.83,514.43 L508.17,514.32 L508.51,514.36 L508.84,514.71 L509.18,515.13 L509.52,515.08 L509.86,514.63 L510.19,514.58 L510.53,515.04 L510.87,515.47 L511.21,515.40 L511.54,514.98 L511.88,514.80 L512.22,515.12 L512.56,515.62 L512.90,515.82 L513.23,515.85 L513.57,515.90 L513.91,515.86 L514.25,515.90 L514.58,516.01 L514.92,516.01 L515.26,515.96 L515.60,515.93 L515.93,515.80 L516.27,515.63 L516.61,515.77 L516.95,515.90 L517.28,515.78 L517.62,515.71 L517.96,515.69 L518.30,515.64 L518.63,515.84 L518.97,516.06 L519.31,516.13 L519.65,516.31 L519.99,516.51 L520.32,516.34 L520.66,516.04 L521.00,516.18 L521.34,516.35 L521.67,516.21 L522.01,516.16 L522.35,516.26 L522.69,516.28 L523.02,516.28 L523.36,516.52 L523.70,516.64 L524.04,516.53 L524.37,516.45 L524.71,516.25 L525.05,516.15 L525.39,516.29 L525.73,516.46 L526.06,516.65 L526.40,516.81 L526.74,517.06 L527.08,517.19 L527.41,517.12 L527.75,516.90 L528.09,516.45 L528.43,516.26 L528.76,516.34 L529.10,516.40 L529.44,516.25 L529.78,516.29 L530.11,516.77 L530.45,517.04 L530.79,517.04 L531.13,516.88 L531.46,516.60 L531.80,516.53 L532.14,516.84 L532.48,517.05 L532.82,517.00 L533.15,516.79 L533.49,516.58 L533.83,516.70 L534.17,516.98 L534.50,517.06 L534.84,517.01 L535.18,516.95 L535.52,516.93 L535.85,516.97 L536.19,516.84 L536.53,516.51 L536.87,516.42 L537.20,516.74 L537.54,517.07 L537.88,517.31 L538.22,517.31 L538.55,517.16 L538.89,516.98 L539.23,516.67 L539.57,516.54 L539.91,516.49 L540.24,516.45 L540.58,516.52 L540.92,516.59 L541.26,516.58 L541.59,516.57 L541.93,516.75 L542.27,517.10 L542.61,517.43 L542.94,517.45 L543.28,517.17 L543.62,517.04 L543.96,517.12 L544.29,517.22 L544.63,517.27 L544.97,517.20 L545.31,517.00 L545.64,516.97 L545.98,517.03 L546.32,516.94 L546.66,516.90 L547.00,517.02 L547.33,517.03 L547.67,516.95 L548.01,516.99 L548.35,517.21 L548.68,517.44 L549.02,517.47 L549.36,517.46 L549.70,517.52 L550.03,517.47 L550.37,517.36 L550.71,517.18 L551.05,517.07 L551.38,517.21 L551.72,517.32 L552.06,517.36 L552.40,517.46 L552.74,517.53 L553.07,517.34 L553.41,517.07 L553.75,517.06 L554.09,517.25 L554.42,517.30 L554.76,517.27 L555.10,517.37 L555.44,517.47 L555.77,517.49 L556.11,517.43 L556.45,517.32 L556.79,517.20 L557.12,517.08 L557.46,517.07 L557.80,517.18 L558.14,517.32 L558.47,517.59 L558.81,517.73 L559.15,517.50 L559.49,517.42 L559.83,517.60 L560.16,517.62 L560.50,517.46 L560.84,517.43 L561.18,517.60 L561.51,517.61 L561.85,517.39 L562.19,517.26 L562.53,517.28 L562.86,517.46 L563.20,517.75 L563.54,517.76 L563.88,517.44 L564.21,517.10 L564.55,516.97 L564.89,517.09 L565.23,517.20 L565.56,517.20 L565.90,517.33 L566.24,517.57 L566.58,517.68 L566.92,517.60 L567.25,517.48 L567.59,517.54 L567.93,517.61 L568.27,517.57 L568.60,517.66 L568.94,517.93 L569.28,518.00 L569.62,517.54 L569.95,517.14 L570.29,517.17 L570.63,517.34 L570.97,517.52 L571.30,517.41 L571.64,517.13 L571.98,517.15 L572.32,517.25 L572.65,517.43 L572.99,517.63 L573.33,517.68 L573.67,517.60 L574.01,517.48 L574.34,517.40 L574.68,517.44 L575.02,517.53 L575.36,517.39 L575.69,517.13 L576.03,517.01 L576.37,517.05 L576.71,517.31 L577.04,517.65 L577.38,517.68 L577.72,517.40 L578.06,517.16 L578.39,517.10 L578.73,517.09 L579.07,517.02 L579.41,517.07 L579.75,517.17 L580.08,517.27 L580.42,517.35 L580.76,517.25 L581.10,517.24 L581.43,517.46 L581.77,517.39 L582.11,517.15 L582.45,517.12 L582.78,517.32 L583.12,517.51 L583.46,517.50 L583.80,517.38 L584.13,517.30 L584.47,517.28 L584.81,517.41 L585.15,517.58 L585.48,517.62 L585.82,517.39 L586.16,517.11 L586.50,517.01 L586.84,517.07 L587.17,517.33 L587.51,517.57 L587.85,517.49 L588.19,517.39 L588.52,517.42 L588.86,517.50 L589.20,517.61 L589.54,517.67 L589.87,517.75 L590.21,517.83 L590.55,517.77 L590.89,517.71 L591.22,517.69 L591.56,517.73 L591.90,517.91 L592.24,518.00 L592.57,517.72 L592.91,517.29 L593.25,517.28 L593.59,517.65 L593.93,517.88 L594.26,517.80 L594.60,517.66 L594.94,517.67 L595.28,517.74 L595.61,517.61 L595.95,517.45 L596.29,517.43 L596.63,517.42 L596.96,517.45 L597.30,517.42 L597.64,517.30 L597.98,517.33 L598.31,517.59 L598.65,517.85 L598.99,517.96 L599.33,517.94 L599.66,517.86 L600.00,517.80 L600.34,517.65 L600.68,517.49 L601.02,517.62 L601.35,517.96 L601.69,518.08 L602.03,517.97 L602.37,517.67 L602.70,517.50 L603.04,517.58 L603.38,517.57 L603.72,517.44 L604.05,517.39 L604.39,517.57 L604.73,517.82 L605.07,517.89 L605.40,517.81 L605.74,517.73 L606.08,517.85 L606.42,518.01 L606.76,517.87 L607.09,517.66 L607.43,517.58 L607.77,517.61 L608.11,517.75 L608.44,517.87 L608.78,517.89 L609.12,517.90 L609.46,517.82 L609.79,517.70 L610.13,517.62 L610.47,517.59 L610.81,517.58 L611.14,517.68 L611.48,517.75 L611.82,517.75 L612.16,517.83 L612.49,517.99 L612.83,518.02 L613.17,517.83 L613.51,517.65 L613.85,517.68 L614.18,517.94 L614.52,518.09 L614.86,517.92 L615.20,517.69 L615.53,517.63 L615.87,517.69 L616.21,517.64 L616.55,517.64 L616.88,517.85 L617.22,518.00 L617.56,517.97 L617.90,517.88 L618.23,517.75 L618.57,517.61 L618.91,517.63 L619.25,517.76 L619.58,517.91 L619.92,518.08 L620.26,517.96 L620.60,517.84 L620.94,517.81 L621.27,517.84 L621.61,517.89 L621.95,517.87 L622.29,517.95 L622.62,517.93 L622.96,517.75 L623.30,517.76 L623.64,517.95 L623.97,517.99 L624.31,517.87 L624.65,517.80 L624.99,518.04 L625.32,518.30 L625.66,518.22 L626.00,518.05 L626.34,517.88 L626.67,517.72 L627.01,517.69 L627.35,517.76 L627.69,517.82 L628.03,517.79 L628.36,517.84 L628.70,518.00 L629.04,518.07 L629.38,517.99 L629.71,517.97 L630.05,517.94 L630.39,517.78 L630.73,517.82 L631.06,517.85 L631.40,517.72 L631.74,517.56 L632.08,517.56 L632.41,517.71 L632.75,517.64 L633.09,517.64 L633.43,517.90 L633.77,518.08 L634.10,518.06 L634.44,517.86 L634.78,517.72 L635.12,517.75 L635.45,517.95 L635.79,518.16 L636.13,518.12 L636.47,518.07 L636.80,518.13 L637.14,518.07 L637.48,518.04 L637.82,518.15 L638.15,518.13 L638.49,517.86 L638.83,517.71 L639.17,517.73 L639.50,517.83 L639.84,517.91 L640.18,517.94 L640.52,517.87 L640.86,517.84 L641.19,518.11 L641.53,518.11 L641.87,517.73 L642.21,517.61 L642.54,517.73 L642.88,517.89 L643.22,517.99 L643.56,518.05 L643.89,517.97 L644.23,517.71 L644.57,517.49 L644.91,517.47 L645.24,517.60 L645.58,517.60 L645.92,517.52 L646.26,517.44 L646.59,517.53 L646.93,517.58 L647.27,517.51 L647.61,517.62 L647.95,517.87 L648.28,517.99 L648.62,518.01 L648.96,518.17 L649.30,518.26 L649.63,518.06 L649.97,517.77 L650.31,517.82 L650.65,517.99 L650.98,517.90 L651.32,517.76 L651.66,517.91 L652.00,517.93 L652.33,517.76 L652.67,517.77 L653.01,517.93 L653.35,518.13 L653.68,518.23 L654.02,518.23 L654.36,518.15 L654.70,518.06 L655.04,518.02 L655.37,517.89 L655.71,517.76 L656.05,517.51 L656.39,517.37 L656.72,517.54 L657.06,517.73 L657.40,517.85 L657.74,517.68 L658.07,517.52 L658.41,517.63 L658.75,517.84 L659.09,518.05 L659.42,517.97 L659.76,517.70 L660.10,517.60 L660.44,517.67 L660.78,517.84 L661.11,518.03 L661.45,518.02 L661.79,517.98 L662.13,518.00 L662.46,518.05 L662.80,518.04 L663.14,518.06 L663.48,518.26 L663.81,518.28 L664.15,518.16 L664.49,518.29 L664.83,518.34 L665.16,518.12 L665.50,517.99 L665.84,517.83 L666.18,517.67 L666.51,517.69 L666.85,517.80 L667.19,517.91 L667.53,518.02 L667.87,518.12 L668.20,518.23 L668.54,518.32 L668.88,518.23 L669.22,518.03 L669.55,518.01 L669.89,518.09 L670.23,518.05 L670.57,517.96 L670.90,517.91 L671.24,517.98 L671.58,518.14 L671.92,518.16 L672.25,518.11 L672.59,518.10 L672.93,517.85 L673.27,517.54 L673.60,517.55 L673.94,517.82 L674.28,517.97 L674.62,518.06 L674.96,518.31 L675.29,518.39 L675.63,518.23 L675.97,517.98 L676.31,517.79 L676.64,517.92 L676.98,518.21 L677.32,518.25 L677.66,518.14 L677.99,518.07 L678.33,518.19 L678.67,518.31 L679.01,518.18 L679.34,518.05 L679.68,517.97 L680.02,517.70 L680.36,517.59 L680.70,517.83 L681.03,517.92 L681.37,517.91 L681.71,518.03 L682.05,518.07 L682.38,517.99 L682.72,517.89 L683.06,517.84 L683.40,517.77 L683.73,517.69 L684.07,517.82 L684.41,517.89 L684.75,517.78 L685.08,517.87 L685.42,517.98 L685.76,517.93 L686.10,517.92 L686.43,517.95 L686.77,518.12 L687.11,518.23 L687.45,517.98 L687.79,517.76 L688.12,517.76 L688.46,517.72 L688.80,517.80 L689.14,518.25 L689.47,518.63 L689.81,518.69 L690.15,518.44 L690.49,518.11 L690.82,518.15 L691.16,518.34 L691.50,518.28 L691.84,518.13 L692.17,517.99 L692.51,517.87 L692.85,517.93 L693.19,518.20 L693.52,518.31 L693.86,518.14 L694.20,517.99 L694.54,518.00 L694.88,518.07 L695.21,517.97 L695.55,517.78 L695.89,517.68 L696.23,517.65 L696.56,517.73 L696.90,517.89 L697.24,517.81 L697.58,517.81 L697.91,518.01 L698.25,518.17 L698.59,518.26 L698.93,518.34 L699.26,518.44 L699.60,518.41 L699.94,518.29 L700.28,518.16 L700.61,517.99 L700.95,517.95 L701.29,518.00 L701.63,518.03 L701.97,518.13 L702.30,518.27 L702.64,518.26 L702.98,518.06 L703.32,517.89 L703.65,518.08 L703.99,518.43 L704.33,518.42 L704.67,518.16 L705.00,518.04 L705.34,517.99 L705.68,518.11 L706.02,518.41 L706.35,518.40 L706.69,518.19 L707.03,518.17 L707.37,518.20 L707.71,518.00 L708.04,517.66 L708.38,517.53 L708.72,517.81 L709.06,517.96 L709.39,517.92 L709.73,517.96 L710.07,518.08 L710.41,518.33 L710.74,518.34 L711.08,518.17 L711.42,518.03 L711.76,517.96 L712.09,517.98 L712.43,518.03 L712.77,518.15 L713.11,518.25 L713.44,518.18 L713.78,518.11 L714.12,517.94 L714.46,517.63 L714.80,517.61 L715.13,518.04 L715.47,518.43 L715.81,518.47 L716.15,518.30 L716.48,518.02 L716.82,517.94 L717.16,518.03 L717.50,518.04 L717.83,518.03 L718.17,518.01 L718.51,518.02 L718.85,517.99 L719.18,517.85 L719.52,517.77 L719.86,517.79 L720.20,517.68 L720.53,517.38 L720.87,517.22 L721.21,517.22 L721.55,517.26 L721.89,517.67 L722.22,518.24 L722.56,518.31 L722.90,518.15 L723.24,518.11 L723.57,518.02 L723.91,518.21 L724.25,518.52 L724.59,518.54 L724.92,518.46 L725.26,518.49 L725.60,518.41 L725.94,518.36 L726.27,518.39 L726.61,518.27 L726.95,518.16 L727.29,518.16 L727.62,518.23 L727.96,518.37" fill="none" stroke="#94b03a" stroke-width="0.8"/></svg>
<div class="t" style="left:137.5px;top:518.1px;font-size:5.8px;font-weight:bold;color:#111;transform:translateX(-100%)">0</div>
<div class="t" style="left:137.5px;top:464.1px;font-size:5.8px;font-weight:bold;color:#111;transform:translateX(-100%)">100</div>
<div class="t" style="left:137.5px;top:410.1px;font-size:5.8px;font-weight:bold;color:#111;transform:translateX(-100%)">200</div>
<div class="t" style="left:137.5px;top:356.0px;font-size:5.8px;font-weight:bold;color:#111;transform:translateX(-100%)">300</div>
<div class="t" style="left:137.5px;top:302.0px;font-size:5.8px;font-weight:bold;color:#111;transform:translateX(-100%)">400</div>
<div class="t" style="left:137.5px;top:248.0px;font-size:5.8px;font-weight:bold;color:#111;transform:translateX(-100%)">500</div>
<div class="t" style="left:137.5px;top:194.0px;font-size:5.8px;font-weight:bold;color:#111;transform:translateX(-100%)">600</div>
<div class="t" style="left:137.5px;top:139.9px;font-size:5.8px;font-weight:bold;color:#111;transform:translateX(-100%)">700</div>
<div class="t" style="left:137.5px;top:85.9px;font-size:5.8px;font-weight:bold;color:#111;transform:translateX(-100%)">800</div>
<div class="t" style="left:154.0px;top:527px;font-size:5.6px;font-weight:bold;color:#111;transform:translateX(-50%)">200</div>
<div class="t" style="left:221.5px;top:527px;font-size:5.6px;font-weight:bold;color:#111;transform:translateX(-50%)">300</div>
<div class="t" style="left:289.1px;top:527px;font-size:5.6px;font-weight:bold;color:#111;transform:translateX(-50%)">400</div>
<div class="t" style="left:356.6px;top:527px;font-size:5.6px;font-weight:bold;color:#111;transform:translateX(-50%)">500</div>
<div class="t" style="left:424.1px;top:527px;font-size:5.6px;font-weight:bold;color:#111;transform:translateX(-50%)">600</div>
<div class="t" style="left:491.6px;top:527px;font-size:5.6px;font-weight:bold;color:#111;transform:translateX(-50%)">700</div>
<div class="t" style="left:559.2px;top:527px;font-size:5.6px;font-weight:bold;color:#111;transform:translateX(-50%)">800</div>
<div class="t" style="left:626.7px;top:527px;font-size:5.6px;font-weight:bold;color:#111;transform:translateX(-50%)">900</div>
<div class="t" style="left:694.2px;top:527px;font-size:5.6px;font-weight:bold;color:#111;transform:translateX(-50%)">1000</div>
<div class="t " style="left:119px;top:75.2px;font-size:5.9px;color:#111;font-weight:bold">mW/m²/nm</div>
<div class="t " style="left:746.8px;top:527px;font-size:6px;color:#111;font-weight:bold">nm</div>
<div class="r" style="left:770px;top:42.5px;width:228px;height:11.3px;background:#ababab"></div>
<div class="t " style="left:772.5px;top:48.2px;font-size:5.7px;color:#1a1a1a;">Results</div>
<div class="t " style="left:772.5px;top:61.8px;font-size:5.8px;color:#222;">Norm</div>
<div class="r" style="left:815px;top:58.2px;width:181px;height:8px;background:#c8c8c8"></div>
<div class="t " style="left:817px;top:62px;font-size:5.8px;color:#a0a0a0;">CIE</div>
<div class="t " style="left:772.5px;top:71.2px;font-size:5.8px;color:#222;">Range Min</div>
<div class="r" style="left:815px;top:67px;width:181px;height:8.6px;background:#ececec;border:1px solid #d0d0d0"></div>
<div class="t " style="left:817px;top:71.3px;font-size:5.8px;color:#a0a0a0;">200,00</div>
<div class="t " style="left:772.5px;top:80.5px;font-size:5.8px;color:#222;">Range Max</div>
<div class="r" style="left:815px;top:76.2px;width:181px;height:8.4px;background:#ececec;border:1px solid #d0d0d0"></div>
<div class="t " style="left:817px;top:80.5px;font-size:5.8px;color:#a0a0a0;">1050,00</div>
<div class="r" style="left:773px;top:86px;width:6.5px;height:6.5px;background:#fff;border:0.6px solid #d0d0d0"></div>
<div class="t " style="left:782px;top:89.5px;font-size:5.8px;color:#a8a8a8;">Lock range</div>
<div class="r" style="left:815px;top:85.6px;width:181px;height:10px;background:#c8c8c8"></div>
<div class="t" style="left:905.5px;top:91px;font-size:5.8px;color:#a0a0a0;transform:translateX(-50%)">Reset range</div>
<div class="t " style="left:772.5px;top:102.5px;font-size:5.8px;color:#222;">Ranges</div>
<div class="r" style="left:815px;top:97.5px;width:181px;height:9.6px;background:#c8c8c8"></div>
<div class="t " style="left:817px;top:102.5px;font-size:5.8px;color:#a0a0a0;">400-500</div>
<div class="r" style="left:770px;top:109.8px;width:227.5px;height:427.6px;background:#fff;border:1px solid #b4b4b4"></div>
<div class="t " style="left:772px;top:116.2px;font-size:5.7px;color:#222;">Name</div>
<div class="t " style="left:862.5px;top:116.2px;font-size:5.7px;color:#222;">Value</div>
<div class="r" style="left:861px;top:111px;width:0.7px;height:10px;background:#e8e8e8"></div>
<div class="t " style="left:782px;top:125.7px;font-size:6.2px;color:#222;letter-spacing:-0.12px">Results</div>
<div class="r" style="left:771px;top:129.412px;width:226px;height:7.824px;background:#f5f5f5"></div>
<div class="t " style="left:792px;top:133.524px;font-size:6.2px;color:#222;letter-spacing:-0.12px">CIE 1931 2° observer</div>
<div class="t " style="left:792px;top:141.34799999999998px;font-size:6.2px;color:#222;letter-spacing:-0.12px">CIE 1964 10° observer</div>
<div class="r" style="left:771px;top:145.06px;width:226px;height:7.824px;background:#f5f5f5"></div>
<div class="t " style="left:792px;top:149.172px;font-size:6.2px;color:#222;letter-spacing:-0.12px">Other</div>
<div class="t " style="left:792px;top:156.99599999999998px;font-size:6.2px;color:#222;letter-spacing:-0.12px">Photobiological Safety</div>
<div class="r" style="left:771px;top:160.708px;width:226px;height:7.824px;background:#f5f5f5"></div>
<div class="t " style="left:792px;top:164.82px;font-size:6.2px;color:#222;letter-spacing:-0.12px">Rendering Indices</div>
<div class="t " style="left:802.5px;top:172.644px;font-size:6.2px;color:#222;letter-spacing:-0.12px">R<span class=sb>a</span></div>
<div class="t " style="left:862.5px;top:172.644px;font-size:6.2px;color:#222;letter-spacing:-0.12px">79,2</div>
<div class="r" style="left:771px;top:176.356px;width:226px;height:7.824px;background:#f5f5f5"></div>
<div class="t " style="left:802.5px;top:180.468px;font-size:6.2px;color:#222;letter-spacing:-0.12px">R<span class=sb>1</span></div>
<div class="t " style="left:862.5px;top:180.468px;font-size:6.2px;color:#222;letter-spacing:-0.12px">73,9</div>
<div class="t " style="left:802.5px;top:188.29199999999997px;font-size:6.2px;color:#222;letter-spacing:-0.12px">R<span class=sb>2</span></div>
<div class="t " style="left:862.5px;top:188.29199999999997px;font-size:6.2px;color:#222;letter-spacing:-0.12px">93,0</div>
<div class="r" style="left:771px;top:192.004px;width:226px;height:7.824px;background:#f5f5f5"></div>
<div class="t " style="left:802.5px;top:196.11599999999999px;font-size:6.2px;color:#222;letter-spacing:-0.12px">R<span class=sb>3</span></div>
<div class="t " style="left:862.5px;top:196.11599999999999px;font-size:6.2px;color:#222;letter-spacing:-0.12px">79,7</div>
<div class="t " style="left:802.5px;top:203.94px;font-size:6.2px;color:#222;letter-spacing:-0.12px">R<span class=sb>4</span></div>
<div class="t " style="left:862.5px;top:203.94px;font-size:6.2px;color:#222;letter-spacing:-0.12px">76,8</div>
<div class="r" style="left:771px;top:207.652px;width:226px;height:7.824px;background:#f5f5f5"></div>
<div class="t " style="left:802.5px;top:211.76399999999998px;font-size:6.2px;color:#222;letter-spacing:-0.12px">R<span class=sb>5</span></div>
<div class="t " style="left:862.5px;top:211.76399999999998px;font-size:6.2px;color:#222;letter-spacing:-0.12px">83,2</div>
<div class="t " style="left:802.5px;top:219.588px;font-size:6.2px;color:#222;letter-spacing:-0.12px">R<span class=sb>6</span></div>
<div class="t " style="left:862.5px;top:219.588px;font-size:6.2px;color:#222;letter-spacing:-0.12px">95,1</div>
<div class="r" style="left:771px;top:223.29999999999998px;width:226px;height:7.824px;background:#f5f5f5"></div>
<div class="t " style="left:802.5px;top:227.41199999999998px;font-size:6.2px;color:#222;letter-spacing:-0.12px">R<span class=sb>7</span></div>
<div class="t " style="left:862.5px;top:227.41199999999998px;font-size:6.2px;color:#222;letter-spacing:-0.12px">82,0</div>
<div class="t " style="left:802.5px;top:235.236px;font-size:6.2px;color:#222;letter-spacing:-0.12px">R<span class=sb>8</span></div>
<div class="t " style="left:862.5px;top:235.236px;font-size:6.2px;color:#222;letter-spacing:-0.12px">49,7</div>
<div class="r" style="left:771px;top:238.948px;width:226px;height:7.824px;background:#f5f5f5"></div>
<div class="t " style="left:802.5px;top:243.06px;font-size:6.2px;color:#222;letter-spacing:-0.12px">R<span class=sb>9</span></div>
<div class="t " style="left:862.5px;top:243.06px;font-size:6.2px;color:#222;letter-spacing:-0.12px">-60,3</div>
<div class="t " style="left:802.5px;top:250.884px;font-size:6.2px;color:#222;letter-spacing:-0.12px">R<span class=sb>10</span></div>
<div class="t " style="left:862.5px;top:250.884px;font-size:6.2px;color:#222;letter-spacing:-0.12px">88,9</div>
<div class="r" style="left:771px;top:254.59600000000003px;width:226px;height:7.824px;background:#f5f5f5"></div>
<div class="t " style="left:802.5px;top:258.708px;font-size:6.2px;color:#222;letter-spacing:-0.12px">R<span class=sb>11</span></div>
<div class="t " style="left:862.5px;top:258.708px;font-size:6.2px;color:#222;letter-spacing:-0.12px">67,6</div>
<div class="t " style="left:802.5px;top:266.532px;font-size:6.2px;color:#222;letter-spacing:-0.12px">R<span class=sb>12</span></div>
<div class="t " style="left:862.5px;top:266.532px;font-size:6.2px;color:#222;letter-spacing:-0.12px">71,2</div>
<div class="r" style="left:771px;top:270.244px;width:226px;height:7.824px;background:#f5f5f5"></div>
<div class="t " style="left:802.5px;top:274.356px;font-size:6.2px;color:#222;letter-spacing:-0.12px">R<span class=sb>13</span></div>
<div class="t " style="left:862.5px;top:274.356px;font-size:6.2px;color:#222;letter-spacing:-0.12px">77,5</div>
<div class="t " style="left:802.5px;top:282.18px;font-size:6.2px;color:#222;letter-spacing:-0.12px">R<span class=sb>14</span></div>
<div class="t " style="left:862.5px;top:282.18px;font-size:6.2px;color:#222;letter-spacing:-0.12px">86,7</div>
<div class="r" style="left:771px;top:285.892px;width:226px;height:7.824px;background:#f5f5f5"></div>
<div class="t " style="left:802.5px;top:290.00399999999996px;font-size:6.2px;color:#222;letter-spacing:-0.12px">R<span class=sb>15</span></div>
<div class="t " style="left:862.5px;top:290.00399999999996px;font-size:6.2px;color:#222;letter-spacing:-0.12px">59,6</div>
<div class="t " style="left:792px;top:297.828px;font-size:6.2px;color:#222;letter-spacing:-0.12px">Metamerism Indices</div>
<div class="r" style="left:771px;top:301.54px;width:226px;height:7.824px;background:#f5f5f5"></div>
<div class="t " style="left:792px;top:305.652px;font-size:6.2px;color:#222;letter-spacing:-0.12px">TM-30-15 Main</div>
<div class="t " style="left:792px;top:313.476px;font-size:6.2px;color:#222;letter-spacing:-0.12px">TM-30-15 Hue Bin Fidelit...</div>
<div class="r" style="left:771px;top:317.18800000000005px;width:226px;height:7.824px;background:#f5f5f5"></div>
<div class="t " style="left:792px;top:321.3px;font-size:6.2px;color:#222;letter-spacing:-0.12px">TM-30-15 Hue Bin Chang...</div>
<div class="t " style="left:792px;top:329.12399999999997px;font-size:6.2px;color:#222;letter-spacing:-0.12px">TM-30-15 Fidelity Index ...</div>
<div class="r" style="left:771px;top:332.836px;width:226px;height:7.824px;background:#f5f5f5"></div>
<div class="t " style="left:792px;top:336.948px;font-size:6.2px;color:#222;letter-spacing:-0.12px">Human Centric Lighting</div>
<div class="t " style="left:802.5px;top:344.772px;font-size:6.2px;color:#222;letter-spacing:-0.12px">EML</div>
<div class="t " style="left:862.5px;top:344.772px;font-size:6.2px;color:#222;letter-spacing:-0.12px">-</div>
<div class="r" style="left:771px;top:348.484px;width:226px;height:7.824px;background:#f5f5f5"></div>
<div class="t " style="left:802.5px;top:352.59599999999995px;font-size:6.2px;color:#222;letter-spacing:-0.12px">Melanopic ratio</div>
<div class="t " style="left:862.5px;top:352.59599999999995px;font-size:6.2px;color:#222;letter-spacing:-0.12px">-</div>
<svg width="998" height="551" style="pointer-events:none"><path d="M773.4000000000001,124.5 L775.2,126.4 L777.0,124.5" fill="none" stroke="#222" stroke-width="1.05"/><path d="M784.4000000000001,131.424 L786.2,133.324 L784.4000000000001,135.22400000000002" fill="none" stroke="#555" stroke-width="0.75"/><path d="M784.4000000000001,139.248 L786.2,141.148 L784.4000000000001,143.048" fill="none" stroke="#555" stroke-width="0.75"/><path d="M784.4000000000001,147.072 L786.2,148.972 L784.4000000000001,150.872" fill="none" stroke="#555" stroke-width="0.75"/><path d="M784.4000000000001,154.896 L786.2,156.796 L784.4000000000001,158.696" fill="none" stroke="#555" stroke-width="0.75"/><path d="M783.4000000000001,163.62 L785.2,165.52 L787.0,163.62" fill="none" stroke="#222" stroke-width="1.05"/><path d="M784.4000000000001,295.728 L786.2,297.628 L784.4000000000001,299.52799999999996" fill="none" stroke="#555" stroke-width="0.75"/><path d="M784.4000000000001,303.552 L786.2,305.452 L784.4000000000001,307.352" fill="none" stroke="#555" stroke-width="0.75"/><path d="M784.4000000000001,311.37600000000003 L786.2,313.276 L784.4000000000001,315.176" fill="none" stroke="#555" stroke-width="0.75"/><path d="M784.4000000000001,319.20000000000005 L786.2,321.1 L784.4000000000001,323.0" fill="none" stroke="#555" stroke-width="0.75"/><path d="M784.4000000000001,327.024 L786.2,328.924 L784.4000000000001,330.82399999999996" fill="none" stroke="#555" stroke-width="0.75"/><path d="M783.4000000000001,335.748 L785.2,337.64799999999997 L787.0,335.748" fill="none" stroke="#222" stroke-width="1.05"/></svg>
<div class="r" style="left:160px;top:539px;width:810px;height:10.5px;background:#e6e6e6;border:1px solid #cfcfcf"></div>
<div class="t " style="left:973px;top:545px;font-size:6.3px;color:#222;">0%</div>
<svg width="998" height="551" style="pointer-events:none"><rect x="995" y="547" width="0.8" height="0.8" fill="#b0b0b0"/><rect x="993" y="549" width="0.8" height="0.8" fill="#b0b0b0"/><rect x="995" y="549" width="0.8" height="0.8" fill="#b0b0b0"/><rect x="991" y="549" width="0.8" height="0.8" fill="#b0b0b0"/></svg>
<div class="r" style="left:0px;top:550px;width:25px;height:1px;background:#222"></div>
<div class="r" style="left:204px;top:550px;width:204px;height:1px;background:#222"></div>
<div class="r" style="left:433px;top:550px;width:565px;height:1px;background:#222"></div>
<svg width="998" height="551" style="pointer-events:none"><rect x="97.8" y="46.2" width="3" height="2.8" fill="none" stroke="#222" stroke-width="0.7"/><rect x="96.6" y="47.5" width="3" height="2.8" fill="#ababab" stroke="#222" stroke-width="0.7"/><path d="M105.2,46.400000000000006 L108.8,50.0 M108.8,46.400000000000006 L105.2,50.0" stroke="#222" stroke-width="0.8"/><rect x="983.8000000000001" y="46.2" width="3" height="2.8" fill="none" stroke="#222" stroke-width="0.7"/><rect x="982.6" y="47.5" width="3" height="2.8" fill="#ababab" stroke="#222" stroke-width="0.7"/><path d="M991.2,46.400000000000006 L994.8,50.0 M994.8,46.400000000000006 L991.2,50.0" stroke="#222" stroke-width="0.8"/><path d="M219.8,26.4 L221,25.0 L222.2,26.4 Z M219.8,28.4 L221,29.799999999999997 L222.2,28.4 Z" fill="#888"/><path d="M273.3,26.4 L274.5,25.0 L275.7,26.4 Z M273.3,28.4 L274.5,29.799999999999997 L275.7,28.4 Z" fill="#888"/><path d="M105.0,71 L106.2,69.6 L107.4,71 Z M105.0,73 L106.2,74.4 L107.4,73 Z" fill="#333"/><path d="M989.3,70.2 L990.5,68.8 L991.7,70.2 Z M989.3,72.2 L990.5,73.60000000000001 L991.7,72.2 Z" fill="#777"/><path d="M989.3,79.4 L990.5,78.0 L991.7,79.4 Z M989.3,81.4 L990.5,82.80000000000001 L991.7,81.4 Z" fill="#777"/><path d="M402.0,26.7 L403.5,28.2 L405.0,26.7" fill="none" stroke="#888" stroke-width="0.6"/><path d="M104.0,60.3 L105.5,61.8 L107.0,60.3" fill="none" stroke="#aaa" stroke-width="0.6"/><path d="M989.0,61.3 L990.5,62.8 L992.0,61.3" fill="none" stroke="#aaa" stroke-width="0.6"/><path d="M989.0,101.6 L990.5,103.1 L992.0,101.6" fill="none" stroke="#aaa" stroke-width="0.6"/><path d="M104.3,83 L106,81.3 L107.7,83" fill="none" stroke="#333" stroke-width="0.8"/><path d="M104.3,519.5 L106,521.2 L107.7,519.5" fill="none" stroke="#555" stroke-width="0.6"/></svg>
</body></html>
